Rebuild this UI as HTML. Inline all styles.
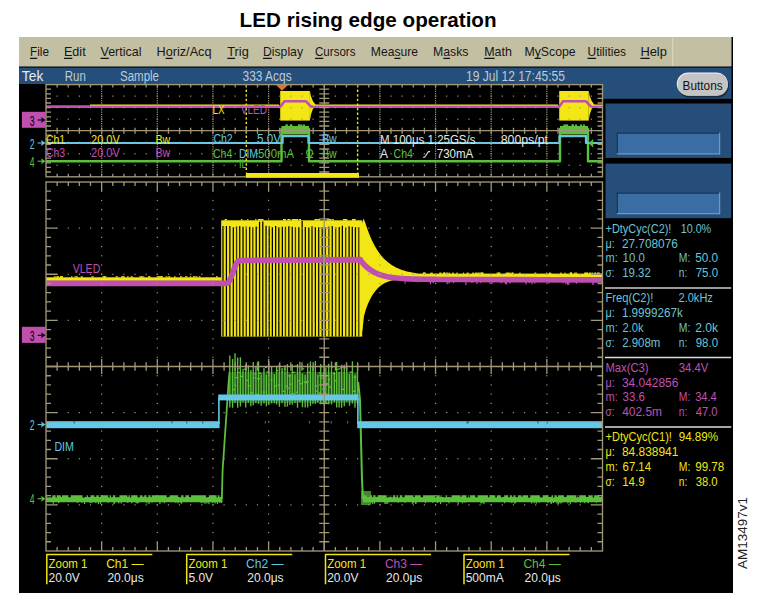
<!DOCTYPE html>
<html><head><meta charset="utf-8"><style>
html,body{margin:0;padding:0;background:#fff;width:762px;height:610px;overflow:hidden}
svg{display:block;font-family:"Liberation Sans", sans-serif}
</style></head><body>
<svg width="762" height="610" viewBox="0 0 762 610">
<text x="239.60" y="26.70" fill="#000" font-size="20.5" font-weight="bold" text-anchor="start" textLength="257.0" lengthAdjust="spacingAndGlyphs" >LED rising edge operation</text><rect x="19.00" y="37.00" width="714.00" height="556.00" fill="#000" /><rect x="19.00" y="37.00" width="712.50" height="29.50" fill="#c3bfa3" /><line x1="672.70" y1="38.00" x2="672.70" y2="66.00" stroke="#dedac4" stroke-width="1"/><rect x="19.00" y="67.60" width="712.50" height="16.40" fill="#254f7a" /><rect x="602.50" y="84.00" width="129.00" height="14.80" fill="#254f7a" /><rect x="605.50" y="103.50" width="125.70" height="54.40" fill="#254f7a" /><rect x="605.50" y="163.60" width="125.70" height="54.60" fill="#254f7a" /><rect x="616.80" y="132.70" width="103.30" height="21.60" fill="#3a6da3" /><line x1="616.80" y1="133.20" x2="720.10" y2="133.20" stroke="#17324e" stroke-width="1.2"/><line x1="617.30" y1="132.70" x2="617.30" y2="154.30" stroke="#17324e" stroke-width="1.2"/><line x1="616.80" y1="153.80" x2="720.10" y2="153.80" stroke="#6d98c4" stroke-width="1.2"/><line x1="719.60" y1="132.70" x2="719.60" y2="154.30" stroke="#6d98c4" stroke-width="1.2"/><rect x="616.80" y="192.60" width="103.30" height="21.60" fill="#3a6da3" /><line x1="616.80" y1="193.10" x2="720.10" y2="193.10" stroke="#17324e" stroke-width="1.2"/><line x1="617.30" y1="192.60" x2="617.30" y2="214.20" stroke="#17324e" stroke-width="1.2"/><line x1="616.80" y1="213.70" x2="720.10" y2="213.70" stroke="#6d98c4" stroke-width="1.2"/><line x1="719.60" y1="192.60" x2="719.60" y2="214.20" stroke="#6d98c4" stroke-width="1.2"/><rect x="678" y="74" width="51" height="23.5" rx="11.5" fill="#1a2a3a"/><rect x="676.8" y="72.4" width="51" height="23" rx="11.5" fill="#f4f4f4"/><rect x="677.6" y="73.4" width="50.4" height="22.4" rx="11.2" fill="#c4c4c4"/><text x="682.60" y="89.70" fill="#101010" font-size="12" font-weight="normal" text-anchor="start" textLength="40.0" lengthAdjust="spacingAndGlyphs" >Buttons</text><g><rect x="46.00" y="277.30" width="175.50" height="3.60" fill="#f2e614" /><rect x="105.05" y="276.30" width="1.30" height="1.20" fill="#f2e614" /><rect x="160.66" y="276.30" width="1.14" height="1.20" fill="#f2e614" /><rect x="141.10" y="276.30" width="1.73" height="1.20" fill="#f2e614" /><rect x="59.86" y="276.30" width="2.01" height="1.20" fill="#f2e614" /><rect x="56.37" y="276.30" width="1.87" height="1.20" fill="#f2e614" /><rect x="61.88" y="276.30" width="1.18" height="1.20" fill="#f2e614" /><rect x="122.17" y="276.30" width="2.65" height="1.20" fill="#f2e614" /><rect x="71.05" y="276.30" width="1.45" height="1.20" fill="#f2e614" /><rect x="156.66" y="276.30" width="2.90" height="1.20" fill="#f2e614" /><rect x="148.11" y="276.30" width="1.79" height="1.20" fill="#f2e614" /><rect x="215.96" y="276.30" width="1.09" height="1.20" fill="#f2e614" /><rect x="195.94" y="276.30" width="1.58" height="1.20" fill="#f2e614" /><rect x="74.52" y="276.30" width="1.24" height="1.20" fill="#f2e614" /><rect x="102.44" y="276.30" width="2.63" height="1.20" fill="#f2e614" /><rect x="80.72" y="276.30" width="2.16" height="1.20" fill="#f2e614" /><rect x="158.62" y="276.30" width="1.74" height="1.20" fill="#f2e614" /><rect x="143.12" y="276.30" width="1.13" height="1.20" fill="#f2e614" /><rect x="60.13" y="276.30" width="1.41" height="1.20" fill="#f2e614" /><rect x="165.67" y="276.30" width="1.86" height="1.20" fill="#f2e614" /><rect x="103.41" y="276.30" width="2.17" height="1.20" fill="#f2e614" /><rect x="127.04" y="276.30" width="1.60" height="1.20" fill="#f2e614" /><rect x="185.04" y="276.30" width="2.40" height="1.20" fill="#f2e614" /><rect x="91.50" y="276.30" width="2.15" height="1.20" fill="#f2e614" /><rect x="139.28" y="276.30" width="2.75" height="1.20" fill="#f2e614" /><rect x="174.01" y="276.30" width="1.58" height="1.20" fill="#f2e614" /><rect x="216.63" y="276.30" width="1.24" height="1.20" fill="#f2e614" /><rect x="121.08" y="276.30" width="2.51" height="1.20" fill="#f2e614" /><rect x="75.84" y="276.30" width="1.98" height="1.20" fill="#f2e614" /><rect x="56.67" y="276.30" width="2.34" height="1.20" fill="#f2e614" /><rect x="179.98" y="276.30" width="2.15" height="1.20" fill="#f2e614" /><rect x="198.83" y="276.30" width="1.63" height="1.20" fill="#f2e614" /><rect x="168.20" y="276.30" width="2.19" height="1.20" fill="#f2e614" /><rect x="148.58" y="276.30" width="1.91" height="1.20" fill="#f2e614" /><rect x="192.79" y="276.30" width="2.89" height="1.20" fill="#f2e614" /><rect x="130.60" y="276.30" width="2.33" height="1.20" fill="#f2e614" /><rect x="60.31" y="276.30" width="2.40" height="1.20" fill="#f2e614" /><rect x="160.01" y="276.30" width="2.99" height="1.20" fill="#f2e614" /><rect x="189.73" y="276.30" width="1.57" height="1.20" fill="#f2e614" /><rect x="115.58" y="276.30" width="2.34" height="1.20" fill="#f2e614" /><rect x="53.84" y="276.30" width="1.92" height="1.20" fill="#f2e614" /><rect x="221.20" y="220.30" width="141.00" height="8.00" fill="#f2e614" /><rect x="221.20" y="225.80" width="141.00" height="110.80" fill="#f2e614" /><path d="M223.00 226.09V336.6M226.41 226.02V336.6M229.86 225.94V336.6M233.31 227.19V336.6M239.74 226.10V336.6M243.03 226.80V336.6M249.67 226.68V336.6M256.21 226.47V336.6M259.57 221.63V336.6M262.80 221.45V336.6M266.05 225.84V336.6M269.21 226.23V336.6M272.36 227.24V336.6M275.65 225.95V336.6M278.86 227.21V336.6M282.34 226.70V336.6M288.83 226.24V336.6M292.24 226.71V336.6M298.85 227.19V336.6M302.15 221.08V336.6M305.36 226.98V336.6M308.83 227.48V336.6M312.02 226.19V336.6M315.37 227.33V336.6M318.73 227.16V336.6M322.20 227.13V336.6M332.25 226.09V336.6M339.20 226.92V336.6M342.35 225.82V336.6M349.09 226.16V336.6M352.29 226.80V336.6M355.44 227.35V336.6" stroke="#000" stroke-width="1.25" fill="none" stroke-linejoin="miter" /><path d="M236.58 226.41V336.6M246.30 226.43V336.6M252.80 227.33V336.6M285.45 226.70V336.6M295.43 227.18V336.6M325.37 227.14V336.6M328.86 226.47V336.6M335.71 227.17V336.6M345.66 227.39V336.6M358.78 227.34V336.6" stroke="#3a3400" stroke-width="1.3" fill="none" stroke-linejoin="miter" /><rect x="295.39" y="219.00" width="2.57" height="1.50" fill="#f2e614" /><rect x="224.58" y="219.00" width="2.32" height="1.50" fill="#f2e614" /><rect x="247.27" y="219.00" width="1.01" height="1.50" fill="#f2e614" /><rect x="332.29" y="219.00" width="1.52" height="1.50" fill="#f2e614" /><rect x="287.34" y="219.00" width="3.18" height="1.50" fill="#f2e614" /><rect x="298.79" y="219.00" width="1.98" height="1.50" fill="#f2e614" /><rect x="293.53" y="219.00" width="2.67" height="1.50" fill="#f2e614" /><rect x="330.23" y="219.00" width="1.32" height="1.50" fill="#f2e614" /><rect x="299.32" y="219.00" width="1.75" height="1.50" fill="#f2e614" /><rect x="260.21" y="219.00" width="3.32" height="1.50" fill="#f2e614" /><rect x="292.06" y="219.00" width="2.69" height="1.50" fill="#f2e614" /><rect x="326.88" y="219.00" width="3.74" height="1.50" fill="#f2e614" /><rect x="283.17" y="219.00" width="2.84" height="1.50" fill="#f2e614" /><rect x="291.77" y="219.00" width="2.54" height="1.50" fill="#f2e614" /><rect x="317.60" y="219.00" width="2.36" height="1.50" fill="#f2e614" /><rect x="295.59" y="219.00" width="2.43" height="1.50" fill="#f2e614" /><rect x="351.93" y="219.00" width="3.10" height="1.50" fill="#f2e614" /><rect x="342.96" y="219.00" width="3.83" height="1.50" fill="#f2e614" /><rect x="257.82" y="219.00" width="2.68" height="1.50" fill="#f2e614" /><rect x="352.17" y="219.00" width="3.52" height="1.50" fill="#f2e614" /><rect x="240.92" y="219.00" width="1.36" height="1.50" fill="#f2e614" /><rect x="283.01" y="219.00" width="1.22" height="1.50" fill="#f2e614" /><rect x="255.21" y="219.00" width="1.22" height="1.50" fill="#f2e614" /><rect x="314.39" y="219.00" width="3.35" height="1.50" fill="#f2e614" /><rect x="345.79" y="219.00" width="1.46" height="1.50" fill="#f2e614" /><path d="M361.00 226.50 L363.60 218.60 L365.20 222.50 L366.00 225.11 L368.00 230.87 L370.00 235.98 L372.00 240.50 L374.00 244.51 L376.00 248.06 L378.00 251.20 L380.00 253.99 L382.00 256.45 L384.00 258.64 L386.00 260.57 L388.00 262.29 L390.00 263.81 L392.00 265.16 L394.00 266.35 L396.00 267.40 L398.00 268.34 L400.00 269.17 L402.00 269.90 L404.00 270.55 L406.00 271.13 L408.00 271.64 L410.00 272.09 L412.00 272.49 L414.00 272.85 L416.00 273.16 L418.00 273.44 L420.00 273.69 L422.00 273.90 L424.00 274.10 L426.00 274.27 L428.00 274.42 L430.00 274.56 L432.00 274.68 L434.00 274.78 L436.00 274.87 L438.00 274.96 L440.00 275.03 L440.00 277.44 L438.00 277.45 L436.00 277.45 L434.00 277.47 L432.00 277.48 L430.00 277.49 L428.00 277.51 L426.00 277.54 L424.00 277.56 L422.00 277.59 L420.00 277.63 L418.00 277.68 L416.00 277.74 L414.00 277.80 L412.00 277.88 L410.00 277.98 L408.00 278.10 L406.00 278.23 L404.00 278.40 L402.00 278.60 L400.00 278.84 L398.00 279.13 L396.00 279.47 L394.00 279.89 L392.00 280.38 L390.00 280.97 L388.00 281.69 L386.00 282.54 L384.00 283.57 L382.00 284.80 L380.00 286.27 L378.00 288.04 L376.00 290.16 L374.00 292.71 L372.00 295.76 L370.00 299.42 L368.00 303.82 L366.00 309.08 L364.00 316.00 L362.50 330.00 L361.00 336.60Z" fill="#f2e614"/><rect x="420.00" y="273.60" width="182.50" height="3.80" fill="#f2e614" /><rect x="548.90" y="272.60" width="2.32" height="1.30" fill="#f2e614" /><rect x="445.74" y="272.60" width="2.77" height="1.30" fill="#f2e614" /><rect x="594.16" y="272.60" width="1.44" height="1.30" fill="#f2e614" /><rect x="591.45" y="272.60" width="1.80" height="1.30" fill="#f2e614" /><rect x="507.71" y="272.60" width="2.98" height="1.30" fill="#f2e614" /><rect x="569.84" y="272.60" width="1.32" height="1.30" fill="#f2e614" /><rect x="497.67" y="272.60" width="2.03" height="1.30" fill="#f2e614" /><rect x="481.04" y="272.60" width="1.39" height="1.30" fill="#f2e614" /><rect x="477.33" y="272.60" width="2.44" height="1.30" fill="#f2e614" /><rect x="423.51" y="272.60" width="2.11" height="1.30" fill="#f2e614" /><rect x="499.28" y="272.60" width="1.04" height="1.30" fill="#f2e614" /><rect x="479.67" y="272.60" width="2.25" height="1.30" fill="#f2e614" /><rect x="512.21" y="272.60" width="1.13" height="1.30" fill="#f2e614" /><rect x="597.31" y="272.60" width="2.58" height="1.30" fill="#f2e614" /><rect x="594.91" y="272.60" width="1.21" height="1.30" fill="#f2e614" /><rect x="467.80" y="272.60" width="1.08" height="1.30" fill="#f2e614" /><rect x="560.22" y="272.60" width="1.54" height="1.30" fill="#f2e614" /><rect x="443.32" y="272.60" width="1.84" height="1.30" fill="#f2e614" /><rect x="584.05" y="272.60" width="2.64" height="1.30" fill="#f2e614" /><rect x="466.55" y="272.60" width="1.30" height="1.30" fill="#f2e614" /><rect x="585.45" y="272.60" width="2.14" height="1.30" fill="#f2e614" /><rect x="546.08" y="272.60" width="1.18" height="1.30" fill="#f2e614" /><rect x="430.35" y="272.60" width="2.38" height="1.30" fill="#f2e614" /><rect x="496.56" y="272.60" width="1.14" height="1.30" fill="#f2e614" /><rect x="588.90" y="272.60" width="2.27" height="1.30" fill="#f2e614" /><rect x="564.29" y="272.60" width="1.17" height="1.30" fill="#f2e614" /><rect x="574.12" y="272.60" width="1.13" height="1.30" fill="#f2e614" /><rect x="575.30" y="272.60" width="1.91" height="1.30" fill="#f2e614" /><rect x="481.05" y="272.60" width="2.11" height="1.30" fill="#f2e614" /><rect x="586.80" y="272.60" width="1.54" height="1.30" fill="#f2e614" /><rect x="443.26" y="272.60" width="2.05" height="1.30" fill="#f2e614" /><rect x="462.92" y="272.60" width="1.22" height="1.30" fill="#f2e614" /><rect x="449.06" y="272.60" width="1.10" height="1.30" fill="#f2e614" /><rect x="456.32" y="272.60" width="1.62" height="1.30" fill="#f2e614" /><rect x="474.90" y="272.60" width="2.52" height="1.30" fill="#f2e614" /><rect x="472.19" y="272.60" width="2.00" height="1.30" fill="#f2e614" /><rect x="452.02" y="272.60" width="1.69" height="1.30" fill="#f2e614" /><rect x="423.27" y="272.60" width="1.50" height="1.30" fill="#f2e614" /><rect x="422.76" y="272.60" width="2.47" height="1.30" fill="#f2e614" /><rect x="519.19" y="272.60" width="1.38" height="1.30" fill="#f2e614" /><rect x="505.46" y="272.60" width="2.87" height="1.30" fill="#f2e614" /><rect x="439.13" y="272.60" width="2.64" height="1.30" fill="#f2e614" /><rect x="497.79" y="272.60" width="1.99" height="1.30" fill="#f2e614" /><rect x="570.23" y="272.60" width="1.79" height="1.30" fill="#f2e614" /><rect x="511.20" y="272.60" width="2.38" height="1.30" fill="#f2e614" /><rect x="596.84" y="272.60" width="1.69" height="1.30" fill="#f2e614" /><rect x="569.81" y="272.60" width="2.41" height="1.30" fill="#f2e614" /><rect x="534.48" y="272.60" width="1.81" height="1.30" fill="#f2e614" /><rect x="482.56" y="272.60" width="1.11" height="1.30" fill="#f2e614" /><rect x="443.37" y="272.60" width="1.14" height="1.30" fill="#f2e614" /><path d="M46.00 283.40 L226.80 283.40 L227.76 283.07 L228.72 282.09 L229.68 280.52 L230.65 278.45 L231.61 276.01 L232.57 273.33 L233.53 270.57 L234.49 267.89 L235.45 265.45 L236.42 263.38 L237.38 261.81 L238.34 260.83 L239.30 260.50 L360.30 259.60 L360.30 259.92 L363.30 263.70 L366.30 266.75 L369.30 269.21 L372.30 271.19 L375.30 272.79 L378.30 274.09 L381.30 275.13 L384.30 275.97 L387.30 276.65 L390.30 277.20 L393.30 277.65 L396.30 278.00 L399.30 278.29 L402.30 278.53 L405.30 278.71 L408.30 278.87 L411.30 278.99 L414.30 279.09 L417.30 279.17 L420.30 279.23 L423.30 279.28 L426.30 279.32 L429.30 279.36 L432.30 279.39 L435.30 279.41 L438.30 279.43 L441.30 279.44 L444.30 279.45 L447.30 279.46 L450.30 279.47 L453.30 279.47 L456.30 279.48 L459.30 279.48 L602.50 280.00" stroke="#c050b0" stroke-width="5.6" fill="none" stroke-linejoin="round" /><rect x="548.18" y="281.50" width="1.20" height="2.01" fill="#c050b0" /><rect x="432.65" y="281.50" width="1.20" height="1.67" fill="#c050b0" /><rect x="568.25" y="281.50" width="1.20" height="3.24" fill="#c050b0" /><rect x="534.11" y="281.50" width="1.20" height="2.06" fill="#c050b0" /><rect x="448.44" y="281.50" width="1.20" height="2.09" fill="#c050b0" /><rect x="491.89" y="281.50" width="1.20" height="1.82" fill="#c050b0" /><rect x="489.16" y="281.50" width="1.20" height="2.03" fill="#c050b0" /><rect x="592.36" y="281.50" width="1.20" height="3.45" fill="#c050b0" /><rect x="509.41" y="281.50" width="1.20" height="1.99" fill="#c050b0" /><rect x="593.13" y="281.50" width="1.20" height="2.12" fill="#c050b0" /><rect x="471.32" y="281.50" width="1.20" height="1.50" fill="#c050b0" /><rect x="476.33" y="281.50" width="1.20" height="2.45" fill="#c050b0" /><rect x="500.55" y="281.50" width="1.20" height="1.90" fill="#c050b0" /><rect x="500.95" y="281.50" width="1.20" height="1.51" fill="#c050b0" /><rect x="452.83" y="281.50" width="1.20" height="1.68" fill="#c050b0" /><rect x="479.90" y="281.50" width="1.20" height="1.58" fill="#c050b0" /><rect x="404.50" y="281.50" width="1.20" height="2.11" fill="#c050b0" /><rect x="446.56" y="281.50" width="1.20" height="2.67" fill="#c050b0" /><rect x="505.84" y="281.50" width="1.20" height="3.00" fill="#c050b0" /><rect x="531.51" y="281.50" width="1.20" height="2.93" fill="#c050b0" /><rect x="575.82" y="281.50" width="1.20" height="2.28" fill="#c050b0" /><rect x="465.23" y="281.50" width="1.20" height="3.47" fill="#c050b0" /><rect x="429.89" y="281.50" width="1.20" height="2.95" fill="#c050b0" /><rect x="528.64" y="281.50" width="1.20" height="1.59" fill="#c050b0" /><rect x="567.06" y="281.50" width="1.20" height="3.28" fill="#c050b0" /><rect x="525.47" y="281.50" width="1.20" height="2.97" fill="#c050b0" /><rect x="562.44" y="281.50" width="1.20" height="1.78" fill="#c050b0" /><rect x="504.75" y="281.50" width="1.20" height="2.51" fill="#c050b0" /><rect x="566.99" y="281.50" width="1.20" height="3.11" fill="#c050b0" /><rect x="565.28" y="281.50" width="1.20" height="2.67" fill="#c050b0" /><path d="M46 498.7H222.5" stroke="#5cc03c" stroke-width="7" fill="none"/><rect x="205.92" y="495.10" width="2.02" height="2.19" fill="#000" /><rect x="87.93" y="495.10" width="1.05" height="1.63" fill="#000" /><rect x="111.21" y="495.10" width="1.16" height="2.34" fill="#000" /><rect x="146.42" y="495.10" width="1.94" height="2.13" fill="#000" /><rect x="168.16" y="495.10" width="1.73" height="1.50" fill="#000" /><rect x="188.99" y="495.10" width="2.12" height="2.00" fill="#000" /><rect x="142.27" y="495.10" width="1.99" height="1.57" fill="#000" /><rect x="178.15" y="495.10" width="1.38" height="1.57" fill="#000" /><rect x="94.27" y="495.10" width="2.09" height="1.71" fill="#000" /><rect x="178.69" y="495.10" width="2.46" height="1.99" fill="#000" /><rect x="115.10" y="495.10" width="1.72" height="2.18" fill="#000" /><rect x="183.52" y="495.10" width="1.93" height="2.14" fill="#000" /><rect x="60.79" y="495.10" width="1.22" height="1.75" fill="#000" /><rect x="179.29" y="495.10" width="1.46" height="2.07" fill="#000" /><rect x="49.22" y="495.10" width="1.09" height="1.77" fill="#000" /><rect x="166.62" y="495.10" width="2.04" height="2.18" fill="#000" /><rect x="98.77" y="495.10" width="1.77" height="1.96" fill="#000" /><rect x="130.01" y="495.10" width="1.18" height="2.39" fill="#000" /><rect x="82.47" y="495.10" width="2.47" height="2.44" fill="#000" /><rect x="50.12" y="495.10" width="1.69" height="2.32" fill="#000" /><rect x="219.32" y="495.10" width="1.67" height="1.77" fill="#000" /><rect x="84.35" y="495.10" width="2.42" height="1.71" fill="#000" /><rect x="150.50" y="495.10" width="1.21" height="2.02" fill="#000" /><rect x="216.59" y="495.10" width="1.20" height="2.32" fill="#000" /><rect x="137.56" y="495.10" width="2.33" height="2.20" fill="#000" /><rect x="88.19" y="495.10" width="2.35" height="1.99" fill="#000" /><rect x="51.42" y="495.10" width="1.01" height="1.99" fill="#000" /><rect x="127.24" y="495.10" width="1.45" height="1.64" fill="#000" /><rect x="108.22" y="495.10" width="1.47" height="2.34" fill="#000" /><rect x="47.31" y="495.10" width="2.13" height="2.34" fill="#000" /><rect x="68.37" y="495.10" width="2.39" height="2.21" fill="#000" /><rect x="207.48" y="495.10" width="1.43" height="1.87" fill="#000" /><rect x="116.94" y="495.10" width="2.50" height="2.09" fill="#000" /><rect x="111.21" y="495.10" width="1.64" height="1.78" fill="#000" /><rect x="55.59" y="495.10" width="1.15" height="2.33" fill="#000" /><rect x="97.84" y="501.70" width="1.20" height="2.40" fill="#5cc03c" /><rect x="91.38" y="501.70" width="1.20" height="1.40" fill="#5cc03c" /><rect x="137.95" y="501.70" width="1.20" height="1.28" fill="#5cc03c" /><rect x="113.46" y="501.70" width="1.20" height="2.43" fill="#5cc03c" /><rect x="204.40" y="501.70" width="1.20" height="2.22" fill="#5cc03c" /><rect x="159.30" y="501.70" width="1.20" height="2.37" fill="#5cc03c" /><rect x="214.44" y="501.70" width="1.20" height="1.82" fill="#5cc03c" /><rect x="175.08" y="501.70" width="1.20" height="1.07" fill="#5cc03c" /><rect x="177.36" y="501.70" width="1.20" height="1.68" fill="#5cc03c" /><rect x="180.97" y="501.70" width="1.20" height="1.97" fill="#5cc03c" /><rect x="97.95" y="501.70" width="1.20" height="1.07" fill="#5cc03c" /><rect x="211.97" y="501.70" width="1.20" height="1.19" fill="#5cc03c" /><rect x="131.05" y="501.70" width="1.20" height="1.52" fill="#5cc03c" /><rect x="100.00" y="501.70" width="1.20" height="2.11" fill="#5cc03c" /><rect x="220.78" y="501.70" width="1.20" height="1.39" fill="#5cc03c" /><rect x="163.77" y="501.70" width="1.20" height="1.45" fill="#5cc03c" /><rect x="146.20" y="501.70" width="1.20" height="1.59" fill="#5cc03c" /><rect x="76.79" y="501.70" width="1.20" height="1.24" fill="#5cc03c" /><rect x="84.00" y="501.70" width="1.20" height="2.36" fill="#5cc03c" /><rect x="135.48" y="501.70" width="1.20" height="1.33" fill="#5cc03c" /><rect x="208.31" y="501.70" width="1.20" height="2.49" fill="#5cc03c" /><rect x="127.09" y="501.70" width="1.20" height="1.21" fill="#5cc03c" /><rect x="81.25" y="501.70" width="1.20" height="1.14" fill="#5cc03c" /><rect x="107.87" y="501.70" width="1.20" height="1.14" fill="#5cc03c" /><rect x="89.56" y="501.70" width="1.20" height="1.39" fill="#5cc03c" /><rect x="148.39" y="501.70" width="1.20" height="2.33" fill="#5cc03c" /><rect x="180.44" y="501.70" width="1.20" height="1.62" fill="#5cc03c" /><rect x="120.67" y="501.70" width="1.20" height="1.79" fill="#5cc03c" /><rect x="114.08" y="501.70" width="1.20" height="1.51" fill="#5cc03c" /><rect x="58.05" y="501.70" width="1.20" height="1.42" fill="#5cc03c" /><rect x="219.25" y="501.70" width="1.20" height="1.19" fill="#5cc03c" /><rect x="136.60" y="501.70" width="1.20" height="1.94" fill="#5cc03c" /><rect x="200.59" y="501.70" width="1.20" height="1.32" fill="#5cc03c" /><rect x="95.24" y="501.70" width="1.20" height="1.37" fill="#5cc03c" /><rect x="118.16" y="501.70" width="1.20" height="1.67" fill="#5cc03c" /><rect x="216.80" y="501.70" width="1.20" height="2.27" fill="#5cc03c" /><rect x="202.37" y="501.70" width="1.20" height="1.03" fill="#5cc03c" /><rect x="52.74" y="501.70" width="1.20" height="2.06" fill="#5cc03c" /><rect x="206.43" y="501.70" width="1.20" height="1.71" fill="#5cc03c" /><rect x="151.52" y="501.70" width="1.20" height="1.00" fill="#5cc03c" /><path d="M221.8 499 L222.6 470 L226.6 412 L228.4 385 L229.5 372" stroke="#5cc03c" stroke-width="1.8" fill="none" stroke-linejoin="round" /><rect x="229.50" y="372.00" width="128.50" height="31.00" fill="#1f4a16" /><path d="M229.80 407.56V355.44M232.60 407.83V358.92M235.04 402.93V353.32M237.66 407.65V357.62M240.39 406.59V357.36M242.97 402.24V368.72M245.73 407.52V364.26M248.42 402.77V365.25M250.87 406.19V369.91M253.24 405.15V361.98M255.89 403.34V366.43M258.55 403.81V361.15M261.13 405.87V374.43M263.96 403.41V367.65M266.41 406.23V374.45M268.89 404.99V361.31M271.59 403.54V366.88M274.30 403.36V373.95M276.62 404.52V365.73M279.33 406.78V363.77M282.07 403.23V368.07M284.95 406.92V365.36M287.39 406.56V364.10M289.87 404.97V374.33M292.28 404.50V364.13M294.98 402.88V374.28M297.51 407.84V363.98M299.90 402.36V361.73M302.43 407.30V373.57M305.17 407.59V374.97M307.67 407.62V363.60M310.42 405.99V361.45M312.95 403.99V366.23M315.35 403.68V361.04M317.86 402.74V374.38M320.74 404.14V363.90M323.53 404.59V372.51M325.86 404.24V367.63M328.71 404.19V363.70M331.55 404.46V361.42M334.34 402.24V371.73M336.66 407.52V361.88M339.11 407.39V371.46M341.62 407.75V364.81M344.29 406.30V364.67M346.78 402.02V364.86M349.53 405.80V373.83M352.40 403.40V361.34M354.98 407.72V374.39M357.51 404.58V364.51" stroke="#5cc03c" stroke-width="1.35" fill="none" stroke-linejoin="miter" /><path d="M229.80 395.70h1.77M232.08 389.63h2.73M234.32 385.43h1.99M235.83 377.58h2.67M236.96 372.31h2.63M238.35 368.07h1.55M240.24 376.42h2.97M242.65 397.61h1.90M243.79 369.09h2.25M245.92 380.30h1.85M247.59 385.85h2.51M249.79 393.10h2.50M250.98 392.91h1.94M252.89 377.94h2.61M254.21 373.92h1.87M255.45 394.29h2.37M256.97 378.67h2.99M258.78 373.40h2.71M260.83 397.71h1.65M262.59 392.21h2.76M265.05 367.29h1.94M266.24 372.07h2.96M268.18 395.77h2.06M270.56 380.37h1.89M272.81 396.26h1.66M274.76 385.84h1.83M276.35 370.52h1.81M277.76 385.18h2.48M279.08 366.36h1.99M281.17 371.92h1.97M282.49 391.45h2.32M283.60 369.24h2.09M285.48 386.45h1.64M286.74 388.25h2.11M288.19 375.84h2.93M289.69 384.13h2.04M291.36 393.66h2.99M292.94 372.31h2.59M294.26 366.19h2.85M295.94 392.25h2.11M298.36 380.75h1.74M299.38 383.65h2.46M301.83 368.85h2.43M303.43 382.14h1.72M304.88 382.68h2.89M306.06 381.70h2.71M308.60 372.31h1.69M311.11 397.22h2.22M312.20 395.64h2.08M314.64 385.85h2.74M315.90 391.15h1.83M317.55 393.08h2.74M318.84 372.98h2.10M320.67 378.27h1.68M322.06 389.20h2.85M323.13 383.99h2.64M324.19 392.82h1.68M326.15 383.60h2.44M327.64 379.44h2.37M329.32 387.08h2.17M331.02 366.75h2.43M332.81 373.53h2.65M335.05 380.67h1.77M336.81 369.43h1.69M338.50 368.93h2.16M340.32 367.30h2.45M341.45 389.47h2.67M343.27 367.74h2.26M344.87 396.43h1.70M347.24 397.88h2.60M349.55 372.20h2.97M351.33 396.61h2.87M352.60 391.23h2.90M353.70 377.23h2.63M354.96 394.69h1.91" stroke="#5cc03c" stroke-width="1.3" fill="none" stroke-linejoin="round" /><path d="M358.2 382 L360 400 L361 440 L362 480 L363 499" stroke="#5cc03c" stroke-width="2" fill="none" stroke-linejoin="round" /><path d="M363 498.7H602.5" stroke="#5cc03c" stroke-width="7" fill="none"/><rect x="398.03" y="495.10" width="1.75" height="2.42" fill="#000" /><rect x="413.37" y="495.10" width="1.39" height="2.01" fill="#000" /><rect x="439.62" y="495.10" width="1.06" height="1.68" fill="#000" /><rect x="402.21" y="495.10" width="2.40" height="2.18" fill="#000" /><rect x="576.21" y="495.10" width="1.25" height="2.28" fill="#000" /><rect x="391.27" y="495.10" width="1.80" height="2.14" fill="#000" /><rect x="449.27" y="495.10" width="2.31" height="2.06" fill="#000" /><rect x="501.47" y="495.10" width="2.32" height="1.60" fill="#000" /><rect x="599.33" y="495.10" width="1.94" height="1.89" fill="#000" /><rect x="553.05" y="495.10" width="1.40" height="2.49" fill="#000" /><rect x="500.83" y="495.10" width="1.54" height="2.26" fill="#000" /><rect x="468.82" y="495.10" width="1.27" height="2.24" fill="#000" /><rect x="375.45" y="495.10" width="2.23" height="1.75" fill="#000" /><rect x="515.50" y="495.10" width="2.48" height="2.09" fill="#000" /><rect x="521.30" y="495.10" width="1.47" height="1.50" fill="#000" /><rect x="372.01" y="495.10" width="1.22" height="2.12" fill="#000" /><rect x="466.44" y="495.10" width="1.77" height="2.40" fill="#000" /><rect x="395.29" y="495.10" width="1.34" height="2.15" fill="#000" /><rect x="369.28" y="495.10" width="1.00" height="1.85" fill="#000" /><rect x="389.21" y="495.10" width="1.54" height="1.72" fill="#000" /><rect x="502.31" y="495.10" width="1.88" height="1.70" fill="#000" /><rect x="511.87" y="495.10" width="1.71" height="1.63" fill="#000" /><rect x="585.97" y="495.10" width="1.37" height="1.65" fill="#000" /><rect x="386.71" y="495.10" width="1.96" height="2.37" fill="#000" /><rect x="549.37" y="495.10" width="1.60" height="1.76" fill="#000" /><rect x="366.72" y="495.10" width="1.97" height="2.06" fill="#000" /><rect x="447.03" y="495.10" width="1.97" height="1.94" fill="#000" /><rect x="586.11" y="495.10" width="2.10" height="1.75" fill="#000" /><rect x="578.13" y="495.10" width="1.07" height="2.03" fill="#000" /><rect x="460.22" y="495.10" width="1.36" height="1.56" fill="#000" /><rect x="548.59" y="495.10" width="1.02" height="2.05" fill="#000" /><rect x="587.00" y="495.10" width="1.21" height="1.70" fill="#000" /><rect x="508.12" y="495.10" width="1.76" height="2.14" fill="#000" /><rect x="556.77" y="495.10" width="1.26" height="1.81" fill="#000" /><rect x="435.16" y="495.10" width="1.07" height="2.39" fill="#000" /><rect x="549.56" y="495.10" width="2.07" height="1.51" fill="#000" /><rect x="564.13" y="495.10" width="2.12" height="1.97" fill="#000" /><rect x="539.80" y="495.10" width="1.68" height="1.73" fill="#000" /><rect x="388.95" y="495.10" width="1.35" height="1.54" fill="#000" /><rect x="443.52" y="495.10" width="2.12" height="2.20" fill="#000" /><rect x="564.34" y="495.10" width="2.07" height="1.77" fill="#000" /><rect x="495.25" y="495.10" width="1.65" height="2.29" fill="#000" /><rect x="488.01" y="495.10" width="1.40" height="2.14" fill="#000" /><rect x="592.74" y="495.10" width="1.33" height="2.38" fill="#000" /><rect x="367.61" y="495.10" width="1.39" height="1.74" fill="#000" /><rect x="540.30" y="495.10" width="2.42" height="2.25" fill="#000" /><rect x="441.47" y="495.10" width="2.32" height="1.83" fill="#000" /><rect x="420.68" y="495.10" width="2.36" height="2.13" fill="#000" /><rect x="528.20" y="495.10" width="2.00" height="2.48" fill="#000" /><rect x="475.27" y="495.10" width="2.26" height="2.20" fill="#000" /><rect x="567.23" y="501.70" width="1.20" height="1.66" fill="#5cc03c" /><rect x="535.74" y="501.70" width="1.20" height="1.86" fill="#5cc03c" /><rect x="436.94" y="501.70" width="1.20" height="1.32" fill="#5cc03c" /><rect x="511.56" y="501.70" width="1.20" height="1.12" fill="#5cc03c" /><rect x="579.86" y="501.70" width="1.20" height="1.22" fill="#5cc03c" /><rect x="370.38" y="501.70" width="1.20" height="1.16" fill="#5cc03c" /><rect x="584.16" y="501.70" width="1.20" height="1.52" fill="#5cc03c" /><rect x="397.62" y="501.70" width="1.20" height="1.04" fill="#5cc03c" /><rect x="373.87" y="501.70" width="1.20" height="2.04" fill="#5cc03c" /><rect x="514.23" y="501.70" width="1.20" height="2.05" fill="#5cc03c" /><rect x="538.62" y="501.70" width="1.20" height="1.10" fill="#5cc03c" /><rect x="503.94" y="501.70" width="1.20" height="1.55" fill="#5cc03c" /><rect x="557.76" y="501.70" width="1.20" height="2.23" fill="#5cc03c" /><rect x="575.23" y="501.70" width="1.20" height="1.10" fill="#5cc03c" /><rect x="569.67" y="501.70" width="1.20" height="2.37" fill="#5cc03c" /><rect x="587.81" y="501.70" width="1.20" height="1.16" fill="#5cc03c" /><rect x="412.76" y="501.70" width="1.20" height="1.17" fill="#5cc03c" /><rect x="372.16" y="501.70" width="1.20" height="2.27" fill="#5cc03c" /><rect x="556.45" y="501.70" width="1.20" height="1.95" fill="#5cc03c" /><rect x="559.54" y="501.70" width="1.20" height="1.95" fill="#5cc03c" /><rect x="432.11" y="501.70" width="1.20" height="1.15" fill="#5cc03c" /><rect x="387.19" y="501.70" width="1.20" height="2.14" fill="#5cc03c" /><rect x="412.58" y="501.70" width="1.20" height="1.48" fill="#5cc03c" /><rect x="464.43" y="501.70" width="1.20" height="1.03" fill="#5cc03c" /><rect x="424.84" y="501.70" width="1.20" height="1.42" fill="#5cc03c" /><rect x="533.64" y="501.70" width="1.20" height="1.55" fill="#5cc03c" /><rect x="440.04" y="501.70" width="1.20" height="2.45" fill="#5cc03c" /><rect x="483.39" y="501.70" width="1.20" height="2.28" fill="#5cc03c" /><rect x="510.53" y="501.70" width="1.20" height="1.05" fill="#5cc03c" /><rect x="461.86" y="501.70" width="1.20" height="1.65" fill="#5cc03c" /><rect x="547.21" y="501.70" width="1.20" height="1.52" fill="#5cc03c" /><rect x="531.00" y="501.70" width="1.20" height="1.81" fill="#5cc03c" /><rect x="415.33" y="501.70" width="1.20" height="2.29" fill="#5cc03c" /><rect x="385.54" y="501.70" width="1.20" height="2.23" fill="#5cc03c" /><rect x="404.38" y="501.70" width="1.20" height="1.00" fill="#5cc03c" /><rect x="411.88" y="501.70" width="1.20" height="2.14" fill="#5cc03c" /><rect x="595.75" y="501.70" width="1.20" height="1.01" fill="#5cc03c" /><rect x="480.33" y="501.70" width="1.20" height="1.74" fill="#5cc03c" /><rect x="552.83" y="501.70" width="1.20" height="1.28" fill="#5cc03c" /><rect x="481.22" y="501.70" width="1.20" height="1.52" fill="#5cc03c" /><rect x="561.15" y="501.70" width="1.20" height="1.39" fill="#5cc03c" /><rect x="587.70" y="501.70" width="1.20" height="1.43" fill="#5cc03c" /><rect x="414.89" y="501.70" width="1.20" height="2.05" fill="#5cc03c" /><rect x="482.10" y="501.70" width="1.20" height="1.16" fill="#5cc03c" /><rect x="514.86" y="501.70" width="1.20" height="1.12" fill="#5cc03c" /><rect x="550.74" y="501.70" width="1.20" height="2.05" fill="#5cc03c" /><rect x="550.50" y="501.70" width="1.20" height="1.94" fill="#5cc03c" /><rect x="448.28" y="501.70" width="1.20" height="1.60" fill="#5cc03c" /><rect x="457.52" y="501.70" width="1.20" height="2.34" fill="#5cc03c" /><rect x="384.42" y="501.70" width="1.20" height="2.33" fill="#5cc03c" /><rect x="361.00" y="491.00" width="10.00" height="14.00" fill="#5cc03c" opacity="0.7"/><rect x="46.00" y="421.20" width="173.60" height="7.00" fill="#64c8e6" /><rect x="218.20" y="394.50" width="140.40" height="5.90" fill="#64c8e6" /><rect x="357.20" y="421.20" width="245.30" height="7.00" fill="#64c8e6" /><path d="M218.9 424 V398 M357.9 398 V424" stroke="#64c8e6" stroke-width="1.6" fill="none" stroke-linejoin="round" /><rect x="73.59" y="421.00" width="1.20" height="2.50" fill="#2a6a80" /><rect x="171.30" y="421.00" width="1.20" height="2.50" fill="#2a6a80" /><rect x="202.13" y="421.00" width="1.20" height="2.50" fill="#2a6a80" /><rect x="546.66" y="421.00" width="1.20" height="2.50" fill="#2a6a80" /><rect x="330.64" y="421.00" width="1.20" height="2.50" fill="#2a6a80" /><rect x="264.82" y="421.00" width="1.20" height="2.50" fill="#2a6a80" /><rect x="537.35" y="421.00" width="1.20" height="2.50" fill="#2a6a80" /><rect x="186.13" y="421.00" width="1.20" height="2.50" fill="#2a6a80" /><rect x="308.89" y="421.00" width="1.20" height="2.50" fill="#2a6a80" /><rect x="347.03" y="421.00" width="1.20" height="2.50" fill="#2a6a80" /><rect x="467.42" y="421.00" width="1.20" height="2.50" fill="#2a6a80" /><rect x="466.61" y="421.00" width="1.20" height="2.50" fill="#2a6a80" /></g><g><rect x="280.20" y="91.00" width="29.70" height="29.60" fill="#f2e614" /><path d="M309.90 91 L310.90 96 L312.90 101 L315.40 104.5 L315.40 106.5 L312.90 109 L311.10 114 L309.90 120.6 Z" fill="#f2e614"/><rect x="559.20" y="91.00" width="29.50" height="29.60" fill="#f2e614" /><path d="M588.70 91 L589.70 96 L591.70 101 L594.20 104.5 L594.20 106.5 L591.70 109 L589.90 114 L588.70 120.6 Z" fill="#f2e614"/><path d="M46 106.6 H280.4 L284.5 101.3 H306 L311 106.6 H559.4 L563 101.3 H586 L591 106.6 H602.5" stroke="#c050b0" stroke-width="2.6" fill="none" stroke-linejoin="round" /><path d="M90 105.2 H279 M313 105.2 H558 M592 105.2 H602.5" stroke="#f2e614" stroke-width="1.2" fill="none" stroke-linejoin="round" /><path d="M46 161.2 H281.5 V129 H309 V161.2 H560 V129 H588 V161.2 H602.5" stroke="#5cc03c" stroke-width="2.4" fill="none" stroke-linejoin="round" /><rect x="281.50" y="126.00" width="27.50" height="8.50" fill="#5cc03c" /><rect x="297.98" y="124.50" width="2.00" height="2.00" fill="#5cc03c" /><rect x="290.39" y="124.50" width="2.00" height="2.00" fill="#5cc03c" /><rect x="289.83" y="124.50" width="2.00" height="2.00" fill="#5cc03c" /><rect x="285.46" y="124.50" width="2.00" height="2.00" fill="#5cc03c" /><rect x="303.00" y="124.50" width="2.00" height="2.00" fill="#5cc03c" /><rect x="298.38" y="124.50" width="2.00" height="2.00" fill="#5cc03c" /><rect x="300.42" y="124.50" width="2.00" height="2.00" fill="#5cc03c" /><rect x="285.82" y="124.50" width="2.00" height="2.00" fill="#5cc03c" /><rect x="560.00" y="126.00" width="28.00" height="8.50" fill="#5cc03c" /><rect x="571.41" y="124.50" width="2.00" height="2.00" fill="#5cc03c" /><rect x="580.11" y="124.50" width="2.00" height="2.00" fill="#5cc03c" /><rect x="575.06" y="124.50" width="2.00" height="2.00" fill="#5cc03c" /><rect x="563.28" y="124.50" width="2.00" height="2.00" fill="#5cc03c" /><rect x="572.01" y="124.50" width="2.00" height="2.00" fill="#5cc03c" /><rect x="583.01" y="124.50" width="2.00" height="2.00" fill="#5cc03c" /><rect x="566.19" y="124.50" width="2.00" height="2.00" fill="#5cc03c" /><rect x="564.98" y="124.50" width="2.00" height="2.00" fill="#5cc03c" /><path d="M46 143 H282.6 V136.2 H308.5 V143 H559.5 V136.2 H586 V143 H602.5" stroke="#64c8e6" stroke-width="2.2" fill="none" stroke-linejoin="round" /><path d="M246.3 85 V173 M357.6 85 V173" stroke="#f2e614" stroke-width="1.4" fill="none" stroke-linejoin="round" stroke-dasharray="2.3 2.3"/></g><g fill="#a09878"><rect x="56.53" y="95.53" width="1.2" height="1.2"/><rect x="67.66" y="95.53" width="1.2" height="1.2"/><rect x="78.79" y="95.53" width="1.2" height="1.2"/><rect x="89.92" y="95.53" width="1.2" height="1.2"/><rect x="101.05" y="95.53" width="1.2" height="1.2"/><rect x="112.18" y="95.53" width="1.2" height="1.2"/><rect x="123.31" y="95.53" width="1.2" height="1.2"/><rect x="134.44" y="95.53" width="1.2" height="1.2"/><rect x="145.57" y="95.53" width="1.2" height="1.2"/><rect x="156.70" y="95.53" width="1.2" height="1.2"/><rect x="167.83" y="95.53" width="1.2" height="1.2"/><rect x="178.96" y="95.53" width="1.2" height="1.2"/><rect x="190.09" y="95.53" width="1.2" height="1.2"/><rect x="201.22" y="95.53" width="1.2" height="1.2"/><rect x="212.35" y="95.53" width="1.2" height="1.2"/><rect x="223.48" y="95.53" width="1.2" height="1.2"/><rect x="234.61" y="95.53" width="1.2" height="1.2"/><rect x="245.74" y="95.53" width="1.2" height="1.2"/><rect x="256.87" y="95.53" width="1.2" height="1.2"/><rect x="268.00" y="95.53" width="1.2" height="1.2"/><rect x="279.13" y="95.53" width="1.2" height="1.2"/><rect x="290.26" y="95.53" width="1.2" height="1.2"/><rect x="301.39" y="95.53" width="1.2" height="1.2"/><rect x="312.52" y="95.53" width="1.2" height="1.2"/><rect x="323.65" y="95.53" width="1.2" height="1.2"/><rect x="334.78" y="95.53" width="1.2" height="1.2"/><rect x="345.91" y="95.53" width="1.2" height="1.2"/><rect x="357.04" y="95.53" width="1.2" height="1.2"/><rect x="368.17" y="95.53" width="1.2" height="1.2"/><rect x="379.30" y="95.53" width="1.2" height="1.2"/><rect x="390.43" y="95.53" width="1.2" height="1.2"/><rect x="401.56" y="95.53" width="1.2" height="1.2"/><rect x="412.69" y="95.53" width="1.2" height="1.2"/><rect x="423.82" y="95.53" width="1.2" height="1.2"/><rect x="434.95" y="95.53" width="1.2" height="1.2"/><rect x="446.08" y="95.53" width="1.2" height="1.2"/><rect x="457.21" y="95.53" width="1.2" height="1.2"/><rect x="468.34" y="95.53" width="1.2" height="1.2"/><rect x="479.47" y="95.53" width="1.2" height="1.2"/><rect x="490.60" y="95.53" width="1.2" height="1.2"/><rect x="501.73" y="95.53" width="1.2" height="1.2"/><rect x="512.86" y="95.53" width="1.2" height="1.2"/><rect x="523.99" y="95.53" width="1.2" height="1.2"/><rect x="535.12" y="95.53" width="1.2" height="1.2"/><rect x="546.25" y="95.53" width="1.2" height="1.2"/><rect x="557.38" y="95.53" width="1.2" height="1.2"/><rect x="568.51" y="95.53" width="1.2" height="1.2"/><rect x="579.64" y="95.53" width="1.2" height="1.2"/><rect x="590.77" y="95.53" width="1.2" height="1.2"/><rect x="56.53" y="107.05" width="1.2" height="1.2"/><rect x="67.66" y="107.05" width="1.2" height="1.2"/><rect x="78.79" y="107.05" width="1.2" height="1.2"/><rect x="89.92" y="107.05" width="1.2" height="1.2"/><rect x="101.05" y="107.05" width="1.2" height="1.2"/><rect x="112.18" y="107.05" width="1.2" height="1.2"/><rect x="123.31" y="107.05" width="1.2" height="1.2"/><rect x="134.44" y="107.05" width="1.2" height="1.2"/><rect x="145.57" y="107.05" width="1.2" height="1.2"/><rect x="156.70" y="107.05" width="1.2" height="1.2"/><rect x="167.83" y="107.05" width="1.2" height="1.2"/><rect x="178.96" y="107.05" width="1.2" height="1.2"/><rect x="190.09" y="107.05" width="1.2" height="1.2"/><rect x="201.22" y="107.05" width="1.2" height="1.2"/><rect x="212.35" y="107.05" width="1.2" height="1.2"/><rect x="223.48" y="107.05" width="1.2" height="1.2"/><rect x="234.61" y="107.05" width="1.2" height="1.2"/><rect x="245.74" y="107.05" width="1.2" height="1.2"/><rect x="256.87" y="107.05" width="1.2" height="1.2"/><rect x="268.00" y="107.05" width="1.2" height="1.2"/><rect x="279.13" y="107.05" width="1.2" height="1.2"/><rect x="290.26" y="107.05" width="1.2" height="1.2"/><rect x="301.39" y="107.05" width="1.2" height="1.2"/><rect x="312.52" y="107.05" width="1.2" height="1.2"/><rect x="323.65" y="107.05" width="1.2" height="1.2"/><rect x="334.78" y="107.05" width="1.2" height="1.2"/><rect x="345.91" y="107.05" width="1.2" height="1.2"/><rect x="357.04" y="107.05" width="1.2" height="1.2"/><rect x="368.17" y="107.05" width="1.2" height="1.2"/><rect x="379.30" y="107.05" width="1.2" height="1.2"/><rect x="390.43" y="107.05" width="1.2" height="1.2"/><rect x="401.56" y="107.05" width="1.2" height="1.2"/><rect x="412.69" y="107.05" width="1.2" height="1.2"/><rect x="423.82" y="107.05" width="1.2" height="1.2"/><rect x="434.95" y="107.05" width="1.2" height="1.2"/><rect x="446.08" y="107.05" width="1.2" height="1.2"/><rect x="457.21" y="107.05" width="1.2" height="1.2"/><rect x="468.34" y="107.05" width="1.2" height="1.2"/><rect x="479.47" y="107.05" width="1.2" height="1.2"/><rect x="490.60" y="107.05" width="1.2" height="1.2"/><rect x="501.73" y="107.05" width="1.2" height="1.2"/><rect x="512.86" y="107.05" width="1.2" height="1.2"/><rect x="523.99" y="107.05" width="1.2" height="1.2"/><rect x="535.12" y="107.05" width="1.2" height="1.2"/><rect x="546.25" y="107.05" width="1.2" height="1.2"/><rect x="557.38" y="107.05" width="1.2" height="1.2"/><rect x="568.51" y="107.05" width="1.2" height="1.2"/><rect x="579.64" y="107.05" width="1.2" height="1.2"/><rect x="590.77" y="107.05" width="1.2" height="1.2"/><rect x="56.53" y="118.58" width="1.2" height="1.2"/><rect x="67.66" y="118.58" width="1.2" height="1.2"/><rect x="78.79" y="118.58" width="1.2" height="1.2"/><rect x="89.92" y="118.58" width="1.2" height="1.2"/><rect x="101.05" y="118.58" width="1.2" height="1.2"/><rect x="112.18" y="118.58" width="1.2" height="1.2"/><rect x="123.31" y="118.58" width="1.2" height="1.2"/><rect x="134.44" y="118.58" width="1.2" height="1.2"/><rect x="145.57" y="118.58" width="1.2" height="1.2"/><rect x="156.70" y="118.58" width="1.2" height="1.2"/><rect x="167.83" y="118.58" width="1.2" height="1.2"/><rect x="178.96" y="118.58" width="1.2" height="1.2"/><rect x="190.09" y="118.58" width="1.2" height="1.2"/><rect x="201.22" y="118.58" width="1.2" height="1.2"/><rect x="212.35" y="118.58" width="1.2" height="1.2"/><rect x="223.48" y="118.58" width="1.2" height="1.2"/><rect x="234.61" y="118.58" width="1.2" height="1.2"/><rect x="245.74" y="118.58" width="1.2" height="1.2"/><rect x="256.87" y="118.58" width="1.2" height="1.2"/><rect x="268.00" y="118.58" width="1.2" height="1.2"/><rect x="279.13" y="118.58" width="1.2" height="1.2"/><rect x="290.26" y="118.58" width="1.2" height="1.2"/><rect x="301.39" y="118.58" width="1.2" height="1.2"/><rect x="312.52" y="118.58" width="1.2" height="1.2"/><rect x="323.65" y="118.58" width="1.2" height="1.2"/><rect x="334.78" y="118.58" width="1.2" height="1.2"/><rect x="345.91" y="118.58" width="1.2" height="1.2"/><rect x="357.04" y="118.58" width="1.2" height="1.2"/><rect x="368.17" y="118.58" width="1.2" height="1.2"/><rect x="379.30" y="118.58" width="1.2" height="1.2"/><rect x="390.43" y="118.58" width="1.2" height="1.2"/><rect x="401.56" y="118.58" width="1.2" height="1.2"/><rect x="412.69" y="118.58" width="1.2" height="1.2"/><rect x="423.82" y="118.58" width="1.2" height="1.2"/><rect x="434.95" y="118.58" width="1.2" height="1.2"/><rect x="446.08" y="118.58" width="1.2" height="1.2"/><rect x="457.21" y="118.58" width="1.2" height="1.2"/><rect x="468.34" y="118.58" width="1.2" height="1.2"/><rect x="479.47" y="118.58" width="1.2" height="1.2"/><rect x="490.60" y="118.58" width="1.2" height="1.2"/><rect x="501.73" y="118.58" width="1.2" height="1.2"/><rect x="512.86" y="118.58" width="1.2" height="1.2"/><rect x="523.99" y="118.58" width="1.2" height="1.2"/><rect x="535.12" y="118.58" width="1.2" height="1.2"/><rect x="546.25" y="118.58" width="1.2" height="1.2"/><rect x="557.38" y="118.58" width="1.2" height="1.2"/><rect x="568.51" y="118.58" width="1.2" height="1.2"/><rect x="579.64" y="118.58" width="1.2" height="1.2"/><rect x="590.77" y="118.58" width="1.2" height="1.2"/><rect x="56.53" y="141.63" width="1.2" height="1.2"/><rect x="67.66" y="141.63" width="1.2" height="1.2"/><rect x="78.79" y="141.63" width="1.2" height="1.2"/><rect x="89.92" y="141.63" width="1.2" height="1.2"/><rect x="101.05" y="141.63" width="1.2" height="1.2"/><rect x="112.18" y="141.63" width="1.2" height="1.2"/><rect x="123.31" y="141.63" width="1.2" height="1.2"/><rect x="134.44" y="141.63" width="1.2" height="1.2"/><rect x="145.57" y="141.63" width="1.2" height="1.2"/><rect x="156.70" y="141.63" width="1.2" height="1.2"/><rect x="167.83" y="141.63" width="1.2" height="1.2"/><rect x="178.96" y="141.63" width="1.2" height="1.2"/><rect x="190.09" y="141.63" width="1.2" height="1.2"/><rect x="201.22" y="141.63" width="1.2" height="1.2"/><rect x="212.35" y="141.63" width="1.2" height="1.2"/><rect x="223.48" y="141.63" width="1.2" height="1.2"/><rect x="234.61" y="141.63" width="1.2" height="1.2"/><rect x="245.74" y="141.63" width="1.2" height="1.2"/><rect x="256.87" y="141.63" width="1.2" height="1.2"/><rect x="268.00" y="141.63" width="1.2" height="1.2"/><rect x="279.13" y="141.63" width="1.2" height="1.2"/><rect x="290.26" y="141.63" width="1.2" height="1.2"/><rect x="301.39" y="141.63" width="1.2" height="1.2"/><rect x="312.52" y="141.63" width="1.2" height="1.2"/><rect x="323.65" y="141.63" width="1.2" height="1.2"/><rect x="334.78" y="141.63" width="1.2" height="1.2"/><rect x="345.91" y="141.63" width="1.2" height="1.2"/><rect x="357.04" y="141.63" width="1.2" height="1.2"/><rect x="368.17" y="141.63" width="1.2" height="1.2"/><rect x="379.30" y="141.63" width="1.2" height="1.2"/><rect x="390.43" y="141.63" width="1.2" height="1.2"/><rect x="401.56" y="141.63" width="1.2" height="1.2"/><rect x="412.69" y="141.63" width="1.2" height="1.2"/><rect x="423.82" y="141.63" width="1.2" height="1.2"/><rect x="434.95" y="141.63" width="1.2" height="1.2"/><rect x="446.08" y="141.63" width="1.2" height="1.2"/><rect x="457.21" y="141.63" width="1.2" height="1.2"/><rect x="468.34" y="141.63" width="1.2" height="1.2"/><rect x="479.47" y="141.63" width="1.2" height="1.2"/><rect x="490.60" y="141.63" width="1.2" height="1.2"/><rect x="501.73" y="141.63" width="1.2" height="1.2"/><rect x="512.86" y="141.63" width="1.2" height="1.2"/><rect x="523.99" y="141.63" width="1.2" height="1.2"/><rect x="535.12" y="141.63" width="1.2" height="1.2"/><rect x="546.25" y="141.63" width="1.2" height="1.2"/><rect x="557.38" y="141.63" width="1.2" height="1.2"/><rect x="568.51" y="141.63" width="1.2" height="1.2"/><rect x="579.64" y="141.63" width="1.2" height="1.2"/><rect x="590.77" y="141.63" width="1.2" height="1.2"/><rect x="56.53" y="153.15" width="1.2" height="1.2"/><rect x="67.66" y="153.15" width="1.2" height="1.2"/><rect x="78.79" y="153.15" width="1.2" height="1.2"/><rect x="89.92" y="153.15" width="1.2" height="1.2"/><rect x="101.05" y="153.15" width="1.2" height="1.2"/><rect x="112.18" y="153.15" width="1.2" height="1.2"/><rect x="123.31" y="153.15" width="1.2" height="1.2"/><rect x="134.44" y="153.15" width="1.2" height="1.2"/><rect x="145.57" y="153.15" width="1.2" height="1.2"/><rect x="156.70" y="153.15" width="1.2" height="1.2"/><rect x="167.83" y="153.15" width="1.2" height="1.2"/><rect x="178.96" y="153.15" width="1.2" height="1.2"/><rect x="190.09" y="153.15" width="1.2" height="1.2"/><rect x="201.22" y="153.15" width="1.2" height="1.2"/><rect x="212.35" y="153.15" width="1.2" height="1.2"/><rect x="223.48" y="153.15" width="1.2" height="1.2"/><rect x="234.61" y="153.15" width="1.2" height="1.2"/><rect x="245.74" y="153.15" width="1.2" height="1.2"/><rect x="256.87" y="153.15" width="1.2" height="1.2"/><rect x="268.00" y="153.15" width="1.2" height="1.2"/><rect x="279.13" y="153.15" width="1.2" height="1.2"/><rect x="290.26" y="153.15" width="1.2" height="1.2"/><rect x="301.39" y="153.15" width="1.2" height="1.2"/><rect x="312.52" y="153.15" width="1.2" height="1.2"/><rect x="323.65" y="153.15" width="1.2" height="1.2"/><rect x="334.78" y="153.15" width="1.2" height="1.2"/><rect x="345.91" y="153.15" width="1.2" height="1.2"/><rect x="357.04" y="153.15" width="1.2" height="1.2"/><rect x="368.17" y="153.15" width="1.2" height="1.2"/><rect x="379.30" y="153.15" width="1.2" height="1.2"/><rect x="390.43" y="153.15" width="1.2" height="1.2"/><rect x="401.56" y="153.15" width="1.2" height="1.2"/><rect x="412.69" y="153.15" width="1.2" height="1.2"/><rect x="423.82" y="153.15" width="1.2" height="1.2"/><rect x="434.95" y="153.15" width="1.2" height="1.2"/><rect x="446.08" y="153.15" width="1.2" height="1.2"/><rect x="457.21" y="153.15" width="1.2" height="1.2"/><rect x="468.34" y="153.15" width="1.2" height="1.2"/><rect x="479.47" y="153.15" width="1.2" height="1.2"/><rect x="490.60" y="153.15" width="1.2" height="1.2"/><rect x="501.73" y="153.15" width="1.2" height="1.2"/><rect x="512.86" y="153.15" width="1.2" height="1.2"/><rect x="523.99" y="153.15" width="1.2" height="1.2"/><rect x="535.12" y="153.15" width="1.2" height="1.2"/><rect x="546.25" y="153.15" width="1.2" height="1.2"/><rect x="557.38" y="153.15" width="1.2" height="1.2"/><rect x="568.51" y="153.15" width="1.2" height="1.2"/><rect x="579.64" y="153.15" width="1.2" height="1.2"/><rect x="590.77" y="153.15" width="1.2" height="1.2"/><rect x="56.53" y="164.68" width="1.2" height="1.2"/><rect x="67.66" y="164.68" width="1.2" height="1.2"/><rect x="78.79" y="164.68" width="1.2" height="1.2"/><rect x="89.92" y="164.68" width="1.2" height="1.2"/><rect x="101.05" y="164.68" width="1.2" height="1.2"/><rect x="112.18" y="164.68" width="1.2" height="1.2"/><rect x="123.31" y="164.68" width="1.2" height="1.2"/><rect x="134.44" y="164.68" width="1.2" height="1.2"/><rect x="145.57" y="164.68" width="1.2" height="1.2"/><rect x="156.70" y="164.68" width="1.2" height="1.2"/><rect x="167.83" y="164.68" width="1.2" height="1.2"/><rect x="178.96" y="164.68" width="1.2" height="1.2"/><rect x="190.09" y="164.68" width="1.2" height="1.2"/><rect x="201.22" y="164.68" width="1.2" height="1.2"/><rect x="212.35" y="164.68" width="1.2" height="1.2"/><rect x="223.48" y="164.68" width="1.2" height="1.2"/><rect x="234.61" y="164.68" width="1.2" height="1.2"/><rect x="245.74" y="164.68" width="1.2" height="1.2"/><rect x="256.87" y="164.68" width="1.2" height="1.2"/><rect x="268.00" y="164.68" width="1.2" height="1.2"/><rect x="279.13" y="164.68" width="1.2" height="1.2"/><rect x="290.26" y="164.68" width="1.2" height="1.2"/><rect x="301.39" y="164.68" width="1.2" height="1.2"/><rect x="312.52" y="164.68" width="1.2" height="1.2"/><rect x="323.65" y="164.68" width="1.2" height="1.2"/><rect x="334.78" y="164.68" width="1.2" height="1.2"/><rect x="345.91" y="164.68" width="1.2" height="1.2"/><rect x="357.04" y="164.68" width="1.2" height="1.2"/><rect x="368.17" y="164.68" width="1.2" height="1.2"/><rect x="379.30" y="164.68" width="1.2" height="1.2"/><rect x="390.43" y="164.68" width="1.2" height="1.2"/><rect x="401.56" y="164.68" width="1.2" height="1.2"/><rect x="412.69" y="164.68" width="1.2" height="1.2"/><rect x="423.82" y="164.68" width="1.2" height="1.2"/><rect x="434.95" y="164.68" width="1.2" height="1.2"/><rect x="446.08" y="164.68" width="1.2" height="1.2"/><rect x="457.21" y="164.68" width="1.2" height="1.2"/><rect x="468.34" y="164.68" width="1.2" height="1.2"/><rect x="479.47" y="164.68" width="1.2" height="1.2"/><rect x="490.60" y="164.68" width="1.2" height="1.2"/><rect x="501.73" y="164.68" width="1.2" height="1.2"/><rect x="512.86" y="164.68" width="1.2" height="1.2"/><rect x="523.99" y="164.68" width="1.2" height="1.2"/><rect x="535.12" y="164.68" width="1.2" height="1.2"/><rect x="546.25" y="164.68" width="1.2" height="1.2"/><rect x="557.38" y="164.68" width="1.2" height="1.2"/><rect x="568.51" y="164.68" width="1.2" height="1.2"/><rect x="579.64" y="164.68" width="1.2" height="1.2"/><rect x="590.77" y="164.68" width="1.2" height="1.2"/><rect x="101.05" y="86.30" width="1.2" height="1.2"/><rect x="101.05" y="88.60" width="1.2" height="1.2"/><rect x="101.05" y="90.90" width="1.2" height="1.2"/><rect x="101.05" y="93.20" width="1.2" height="1.2"/><rect x="101.05" y="95.50" width="1.2" height="1.2"/><rect x="101.05" y="97.80" width="1.2" height="1.2"/><rect x="101.05" y="100.10" width="1.2" height="1.2"/><rect x="101.05" y="102.40" width="1.2" height="1.2"/><rect x="101.05" y="104.70" width="1.2" height="1.2"/><rect x="101.05" y="107.00" width="1.2" height="1.2"/><rect x="101.05" y="109.30" width="1.2" height="1.2"/><rect x="101.05" y="111.60" width="1.2" height="1.2"/><rect x="101.05" y="113.90" width="1.2" height="1.2"/><rect x="101.05" y="116.20" width="1.2" height="1.2"/><rect x="101.05" y="118.50" width="1.2" height="1.2"/><rect x="101.05" y="120.80" width="1.2" height="1.2"/><rect x="101.05" y="123.10" width="1.2" height="1.2"/><rect x="101.05" y="125.40" width="1.2" height="1.2"/><rect x="101.05" y="127.70" width="1.2" height="1.2"/><rect x="101.05" y="130.00" width="1.2" height="1.2"/><rect x="101.05" y="132.30" width="1.2" height="1.2"/><rect x="101.05" y="134.60" width="1.2" height="1.2"/><rect x="101.05" y="136.90" width="1.2" height="1.2"/><rect x="101.05" y="139.20" width="1.2" height="1.2"/><rect x="101.05" y="141.50" width="1.2" height="1.2"/><rect x="101.05" y="143.80" width="1.2" height="1.2"/><rect x="101.05" y="146.10" width="1.2" height="1.2"/><rect x="101.05" y="148.40" width="1.2" height="1.2"/><rect x="101.05" y="150.70" width="1.2" height="1.2"/><rect x="101.05" y="153.00" width="1.2" height="1.2"/><rect x="101.05" y="155.30" width="1.2" height="1.2"/><rect x="101.05" y="157.60" width="1.2" height="1.2"/><rect x="101.05" y="159.90" width="1.2" height="1.2"/><rect x="101.05" y="162.20" width="1.2" height="1.2"/><rect x="101.05" y="164.50" width="1.2" height="1.2"/><rect x="101.05" y="166.80" width="1.2" height="1.2"/><rect x="101.05" y="169.10" width="1.2" height="1.2"/><rect x="101.05" y="171.40" width="1.2" height="1.2"/><rect x="101.05" y="173.70" width="1.2" height="1.2"/><rect x="156.70" y="86.30" width="1.2" height="1.2"/><rect x="156.70" y="88.60" width="1.2" height="1.2"/><rect x="156.70" y="90.90" width="1.2" height="1.2"/><rect x="156.70" y="93.20" width="1.2" height="1.2"/><rect x="156.70" y="95.50" width="1.2" height="1.2"/><rect x="156.70" y="97.80" width="1.2" height="1.2"/><rect x="156.70" y="100.10" width="1.2" height="1.2"/><rect x="156.70" y="102.40" width="1.2" height="1.2"/><rect x="156.70" y="104.70" width="1.2" height="1.2"/><rect x="156.70" y="107.00" width="1.2" height="1.2"/><rect x="156.70" y="109.30" width="1.2" height="1.2"/><rect x="156.70" y="111.60" width="1.2" height="1.2"/><rect x="156.70" y="113.90" width="1.2" height="1.2"/><rect x="156.70" y="116.20" width="1.2" height="1.2"/><rect x="156.70" y="118.50" width="1.2" height="1.2"/><rect x="156.70" y="120.80" width="1.2" height="1.2"/><rect x="156.70" y="123.10" width="1.2" height="1.2"/><rect x="156.70" y="125.40" width="1.2" height="1.2"/><rect x="156.70" y="127.70" width="1.2" height="1.2"/><rect x="156.70" y="130.00" width="1.2" height="1.2"/><rect x="156.70" y="132.30" width="1.2" height="1.2"/><rect x="156.70" y="134.60" width="1.2" height="1.2"/><rect x="156.70" y="136.90" width="1.2" height="1.2"/><rect x="156.70" y="139.20" width="1.2" height="1.2"/><rect x="156.70" y="141.50" width="1.2" height="1.2"/><rect x="156.70" y="143.80" width="1.2" height="1.2"/><rect x="156.70" y="146.10" width="1.2" height="1.2"/><rect x="156.70" y="148.40" width="1.2" height="1.2"/><rect x="156.70" y="150.70" width="1.2" height="1.2"/><rect x="156.70" y="153.00" width="1.2" height="1.2"/><rect x="156.70" y="155.30" width="1.2" height="1.2"/><rect x="156.70" y="157.60" width="1.2" height="1.2"/><rect x="156.70" y="159.90" width="1.2" height="1.2"/><rect x="156.70" y="162.20" width="1.2" height="1.2"/><rect x="156.70" y="164.50" width="1.2" height="1.2"/><rect x="156.70" y="166.80" width="1.2" height="1.2"/><rect x="156.70" y="169.10" width="1.2" height="1.2"/><rect x="156.70" y="171.40" width="1.2" height="1.2"/><rect x="156.70" y="173.70" width="1.2" height="1.2"/><rect x="212.35" y="86.30" width="1.2" height="1.2"/><rect x="212.35" y="88.60" width="1.2" height="1.2"/><rect x="212.35" y="90.90" width="1.2" height="1.2"/><rect x="212.35" y="93.20" width="1.2" height="1.2"/><rect x="212.35" y="95.50" width="1.2" height="1.2"/><rect x="212.35" y="97.80" width="1.2" height="1.2"/><rect x="212.35" y="100.10" width="1.2" height="1.2"/><rect x="212.35" y="102.40" width="1.2" height="1.2"/><rect x="212.35" y="104.70" width="1.2" height="1.2"/><rect x="212.35" y="107.00" width="1.2" height="1.2"/><rect x="212.35" y="109.30" width="1.2" height="1.2"/><rect x="212.35" y="111.60" width="1.2" height="1.2"/><rect x="212.35" y="113.90" width="1.2" height="1.2"/><rect x="212.35" y="116.20" width="1.2" height="1.2"/><rect x="212.35" y="118.50" width="1.2" height="1.2"/><rect x="212.35" y="120.80" width="1.2" height="1.2"/><rect x="212.35" y="123.10" width="1.2" height="1.2"/><rect x="212.35" y="125.40" width="1.2" height="1.2"/><rect x="212.35" y="127.70" width="1.2" height="1.2"/><rect x="212.35" y="130.00" width="1.2" height="1.2"/><rect x="212.35" y="132.30" width="1.2" height="1.2"/><rect x="212.35" y="134.60" width="1.2" height="1.2"/><rect x="212.35" y="136.90" width="1.2" height="1.2"/><rect x="212.35" y="139.20" width="1.2" height="1.2"/><rect x="212.35" y="141.50" width="1.2" height="1.2"/><rect x="212.35" y="143.80" width="1.2" height="1.2"/><rect x="212.35" y="146.10" width="1.2" height="1.2"/><rect x="212.35" y="148.40" width="1.2" height="1.2"/><rect x="212.35" y="150.70" width="1.2" height="1.2"/><rect x="212.35" y="153.00" width="1.2" height="1.2"/><rect x="212.35" y="155.30" width="1.2" height="1.2"/><rect x="212.35" y="157.60" width="1.2" height="1.2"/><rect x="212.35" y="159.90" width="1.2" height="1.2"/><rect x="212.35" y="162.20" width="1.2" height="1.2"/><rect x="212.35" y="164.50" width="1.2" height="1.2"/><rect x="212.35" y="166.80" width="1.2" height="1.2"/><rect x="212.35" y="169.10" width="1.2" height="1.2"/><rect x="212.35" y="171.40" width="1.2" height="1.2"/><rect x="212.35" y="173.70" width="1.2" height="1.2"/><rect x="268.00" y="86.30" width="1.2" height="1.2"/><rect x="268.00" y="88.60" width="1.2" height="1.2"/><rect x="268.00" y="90.90" width="1.2" height="1.2"/><rect x="268.00" y="93.20" width="1.2" height="1.2"/><rect x="268.00" y="95.50" width="1.2" height="1.2"/><rect x="268.00" y="97.80" width="1.2" height="1.2"/><rect x="268.00" y="100.10" width="1.2" height="1.2"/><rect x="268.00" y="102.40" width="1.2" height="1.2"/><rect x="268.00" y="104.70" width="1.2" height="1.2"/><rect x="268.00" y="107.00" width="1.2" height="1.2"/><rect x="268.00" y="109.30" width="1.2" height="1.2"/><rect x="268.00" y="111.60" width="1.2" height="1.2"/><rect x="268.00" y="113.90" width="1.2" height="1.2"/><rect x="268.00" y="116.20" width="1.2" height="1.2"/><rect x="268.00" y="118.50" width="1.2" height="1.2"/><rect x="268.00" y="120.80" width="1.2" height="1.2"/><rect x="268.00" y="123.10" width="1.2" height="1.2"/><rect x="268.00" y="125.40" width="1.2" height="1.2"/><rect x="268.00" y="127.70" width="1.2" height="1.2"/><rect x="268.00" y="130.00" width="1.2" height="1.2"/><rect x="268.00" y="132.30" width="1.2" height="1.2"/><rect x="268.00" y="134.60" width="1.2" height="1.2"/><rect x="268.00" y="136.90" width="1.2" height="1.2"/><rect x="268.00" y="139.20" width="1.2" height="1.2"/><rect x="268.00" y="141.50" width="1.2" height="1.2"/><rect x="268.00" y="143.80" width="1.2" height="1.2"/><rect x="268.00" y="146.10" width="1.2" height="1.2"/><rect x="268.00" y="148.40" width="1.2" height="1.2"/><rect x="268.00" y="150.70" width="1.2" height="1.2"/><rect x="268.00" y="153.00" width="1.2" height="1.2"/><rect x="268.00" y="155.30" width="1.2" height="1.2"/><rect x="268.00" y="157.60" width="1.2" height="1.2"/><rect x="268.00" y="159.90" width="1.2" height="1.2"/><rect x="268.00" y="162.20" width="1.2" height="1.2"/><rect x="268.00" y="164.50" width="1.2" height="1.2"/><rect x="268.00" y="166.80" width="1.2" height="1.2"/><rect x="268.00" y="169.10" width="1.2" height="1.2"/><rect x="268.00" y="171.40" width="1.2" height="1.2"/><rect x="268.00" y="173.70" width="1.2" height="1.2"/><rect x="379.30" y="86.30" width="1.2" height="1.2"/><rect x="379.30" y="88.60" width="1.2" height="1.2"/><rect x="379.30" y="90.90" width="1.2" height="1.2"/><rect x="379.30" y="93.20" width="1.2" height="1.2"/><rect x="379.30" y="95.50" width="1.2" height="1.2"/><rect x="379.30" y="97.80" width="1.2" height="1.2"/><rect x="379.30" y="100.10" width="1.2" height="1.2"/><rect x="379.30" y="102.40" width="1.2" height="1.2"/><rect x="379.30" y="104.70" width="1.2" height="1.2"/><rect x="379.30" y="107.00" width="1.2" height="1.2"/><rect x="379.30" y="109.30" width="1.2" height="1.2"/><rect x="379.30" y="111.60" width="1.2" height="1.2"/><rect x="379.30" y="113.90" width="1.2" height="1.2"/><rect x="379.30" y="116.20" width="1.2" height="1.2"/><rect x="379.30" y="118.50" width="1.2" height="1.2"/><rect x="379.30" y="120.80" width="1.2" height="1.2"/><rect x="379.30" y="123.10" width="1.2" height="1.2"/><rect x="379.30" y="125.40" width="1.2" height="1.2"/><rect x="379.30" y="127.70" width="1.2" height="1.2"/><rect x="379.30" y="130.00" width="1.2" height="1.2"/><rect x="379.30" y="132.30" width="1.2" height="1.2"/><rect x="379.30" y="134.60" width="1.2" height="1.2"/><rect x="379.30" y="136.90" width="1.2" height="1.2"/><rect x="379.30" y="139.20" width="1.2" height="1.2"/><rect x="379.30" y="141.50" width="1.2" height="1.2"/><rect x="379.30" y="143.80" width="1.2" height="1.2"/><rect x="379.30" y="146.10" width="1.2" height="1.2"/><rect x="379.30" y="148.40" width="1.2" height="1.2"/><rect x="379.30" y="150.70" width="1.2" height="1.2"/><rect x="379.30" y="153.00" width="1.2" height="1.2"/><rect x="379.30" y="155.30" width="1.2" height="1.2"/><rect x="379.30" y="157.60" width="1.2" height="1.2"/><rect x="379.30" y="159.90" width="1.2" height="1.2"/><rect x="379.30" y="162.20" width="1.2" height="1.2"/><rect x="379.30" y="164.50" width="1.2" height="1.2"/><rect x="379.30" y="166.80" width="1.2" height="1.2"/><rect x="379.30" y="169.10" width="1.2" height="1.2"/><rect x="379.30" y="171.40" width="1.2" height="1.2"/><rect x="379.30" y="173.70" width="1.2" height="1.2"/><rect x="434.95" y="86.30" width="1.2" height="1.2"/><rect x="434.95" y="88.60" width="1.2" height="1.2"/><rect x="434.95" y="90.90" width="1.2" height="1.2"/><rect x="434.95" y="93.20" width="1.2" height="1.2"/><rect x="434.95" y="95.50" width="1.2" height="1.2"/><rect x="434.95" y="97.80" width="1.2" height="1.2"/><rect x="434.95" y="100.10" width="1.2" height="1.2"/><rect x="434.95" y="102.40" width="1.2" height="1.2"/><rect x="434.95" y="104.70" width="1.2" height="1.2"/><rect x="434.95" y="107.00" width="1.2" height="1.2"/><rect x="434.95" y="109.30" width="1.2" height="1.2"/><rect x="434.95" y="111.60" width="1.2" height="1.2"/><rect x="434.95" y="113.90" width="1.2" height="1.2"/><rect x="434.95" y="116.20" width="1.2" height="1.2"/><rect x="434.95" y="118.50" width="1.2" height="1.2"/><rect x="434.95" y="120.80" width="1.2" height="1.2"/><rect x="434.95" y="123.10" width="1.2" height="1.2"/><rect x="434.95" y="125.40" width="1.2" height="1.2"/><rect x="434.95" y="127.70" width="1.2" height="1.2"/><rect x="434.95" y="130.00" width="1.2" height="1.2"/><rect x="434.95" y="132.30" width="1.2" height="1.2"/><rect x="434.95" y="134.60" width="1.2" height="1.2"/><rect x="434.95" y="136.90" width="1.2" height="1.2"/><rect x="434.95" y="139.20" width="1.2" height="1.2"/><rect x="434.95" y="141.50" width="1.2" height="1.2"/><rect x="434.95" y="143.80" width="1.2" height="1.2"/><rect x="434.95" y="146.10" width="1.2" height="1.2"/><rect x="434.95" y="148.40" width="1.2" height="1.2"/><rect x="434.95" y="150.70" width="1.2" height="1.2"/><rect x="434.95" y="153.00" width="1.2" height="1.2"/><rect x="434.95" y="155.30" width="1.2" height="1.2"/><rect x="434.95" y="157.60" width="1.2" height="1.2"/><rect x="434.95" y="159.90" width="1.2" height="1.2"/><rect x="434.95" y="162.20" width="1.2" height="1.2"/><rect x="434.95" y="164.50" width="1.2" height="1.2"/><rect x="434.95" y="166.80" width="1.2" height="1.2"/><rect x="434.95" y="169.10" width="1.2" height="1.2"/><rect x="434.95" y="171.40" width="1.2" height="1.2"/><rect x="434.95" y="173.70" width="1.2" height="1.2"/><rect x="490.60" y="86.30" width="1.2" height="1.2"/><rect x="490.60" y="88.60" width="1.2" height="1.2"/><rect x="490.60" y="90.90" width="1.2" height="1.2"/><rect x="490.60" y="93.20" width="1.2" height="1.2"/><rect x="490.60" y="95.50" width="1.2" height="1.2"/><rect x="490.60" y="97.80" width="1.2" height="1.2"/><rect x="490.60" y="100.10" width="1.2" height="1.2"/><rect x="490.60" y="102.40" width="1.2" height="1.2"/><rect x="490.60" y="104.70" width="1.2" height="1.2"/><rect x="490.60" y="107.00" width="1.2" height="1.2"/><rect x="490.60" y="109.30" width="1.2" height="1.2"/><rect x="490.60" y="111.60" width="1.2" height="1.2"/><rect x="490.60" y="113.90" width="1.2" height="1.2"/><rect x="490.60" y="116.20" width="1.2" height="1.2"/><rect x="490.60" y="118.50" width="1.2" height="1.2"/><rect x="490.60" y="120.80" width="1.2" height="1.2"/><rect x="490.60" y="123.10" width="1.2" height="1.2"/><rect x="490.60" y="125.40" width="1.2" height="1.2"/><rect x="490.60" y="127.70" width="1.2" height="1.2"/><rect x="490.60" y="130.00" width="1.2" height="1.2"/><rect x="490.60" y="132.30" width="1.2" height="1.2"/><rect x="490.60" y="134.60" width="1.2" height="1.2"/><rect x="490.60" y="136.90" width="1.2" height="1.2"/><rect x="490.60" y="139.20" width="1.2" height="1.2"/><rect x="490.60" y="141.50" width="1.2" height="1.2"/><rect x="490.60" y="143.80" width="1.2" height="1.2"/><rect x="490.60" y="146.10" width="1.2" height="1.2"/><rect x="490.60" y="148.40" width="1.2" height="1.2"/><rect x="490.60" y="150.70" width="1.2" height="1.2"/><rect x="490.60" y="153.00" width="1.2" height="1.2"/><rect x="490.60" y="155.30" width="1.2" height="1.2"/><rect x="490.60" y="157.60" width="1.2" height="1.2"/><rect x="490.60" y="159.90" width="1.2" height="1.2"/><rect x="490.60" y="162.20" width="1.2" height="1.2"/><rect x="490.60" y="164.50" width="1.2" height="1.2"/><rect x="490.60" y="166.80" width="1.2" height="1.2"/><rect x="490.60" y="169.10" width="1.2" height="1.2"/><rect x="490.60" y="171.40" width="1.2" height="1.2"/><rect x="490.60" y="173.70" width="1.2" height="1.2"/><rect x="546.25" y="86.30" width="1.2" height="1.2"/><rect x="546.25" y="88.60" width="1.2" height="1.2"/><rect x="546.25" y="90.90" width="1.2" height="1.2"/><rect x="546.25" y="93.20" width="1.2" height="1.2"/><rect x="546.25" y="95.50" width="1.2" height="1.2"/><rect x="546.25" y="97.80" width="1.2" height="1.2"/><rect x="546.25" y="100.10" width="1.2" height="1.2"/><rect x="546.25" y="102.40" width="1.2" height="1.2"/><rect x="546.25" y="104.70" width="1.2" height="1.2"/><rect x="546.25" y="107.00" width="1.2" height="1.2"/><rect x="546.25" y="109.30" width="1.2" height="1.2"/><rect x="546.25" y="111.60" width="1.2" height="1.2"/><rect x="546.25" y="113.90" width="1.2" height="1.2"/><rect x="546.25" y="116.20" width="1.2" height="1.2"/><rect x="546.25" y="118.50" width="1.2" height="1.2"/><rect x="546.25" y="120.80" width="1.2" height="1.2"/><rect x="546.25" y="123.10" width="1.2" height="1.2"/><rect x="546.25" y="125.40" width="1.2" height="1.2"/><rect x="546.25" y="127.70" width="1.2" height="1.2"/><rect x="546.25" y="130.00" width="1.2" height="1.2"/><rect x="546.25" y="132.30" width="1.2" height="1.2"/><rect x="546.25" y="134.60" width="1.2" height="1.2"/><rect x="546.25" y="136.90" width="1.2" height="1.2"/><rect x="546.25" y="139.20" width="1.2" height="1.2"/><rect x="546.25" y="141.50" width="1.2" height="1.2"/><rect x="546.25" y="143.80" width="1.2" height="1.2"/><rect x="546.25" y="146.10" width="1.2" height="1.2"/><rect x="546.25" y="148.40" width="1.2" height="1.2"/><rect x="546.25" y="150.70" width="1.2" height="1.2"/><rect x="546.25" y="153.00" width="1.2" height="1.2"/><rect x="546.25" y="155.30" width="1.2" height="1.2"/><rect x="546.25" y="157.60" width="1.2" height="1.2"/><rect x="546.25" y="159.90" width="1.2" height="1.2"/><rect x="546.25" y="162.20" width="1.2" height="1.2"/><rect x="546.25" y="164.50" width="1.2" height="1.2"/><rect x="546.25" y="166.80" width="1.2" height="1.2"/><rect x="546.25" y="169.10" width="1.2" height="1.2"/><rect x="546.25" y="171.40" width="1.2" height="1.2"/><rect x="546.25" y="173.70" width="1.2" height="1.2"/></g><rect x="46.00" y="84.60" width="556.50" height="92.20" fill="none" stroke="#a09878" stroke-width="1.35"/><line x1="324.25" y1="84.60" x2="324.25" y2="176.80" stroke="#a09878" stroke-width="1.3"/><line x1="46.00" y1="130.70" x2="602.50" y2="130.70" stroke="#a09878" stroke-width="1.3"/><path d="M46.00 89.20h5M602.50 89.20h-5M319.25 89.20h10M46.00 93.80h5M602.50 93.80h-5M319.25 93.80h10M46.00 98.40h5M602.50 98.40h-5M319.25 98.40h10M46.00 103.00h5M602.50 103.00h-5M319.25 103.00h10M46.00 107.60h5M602.50 107.60h-5M319.25 107.60h10M46.00 112.20h5M602.50 112.20h-5M319.25 112.20h10M46.00 116.80h5M602.50 116.80h-5M319.25 116.80h10M46.00 121.40h5M602.50 121.40h-5M319.25 121.40h10M46.00 126.00h5M602.50 126.00h-5M319.25 126.00h10M46.00 130.60h5M602.50 130.60h-5M319.25 130.60h10M46.00 135.20h5M602.50 135.20h-5M319.25 135.20h10M46.00 139.80h5M602.50 139.80h-5M319.25 139.80h10M46.00 144.40h5M602.50 144.40h-5M319.25 144.40h10M46.00 149.00h5M602.50 149.00h-5M319.25 149.00h10M46.00 153.60h5M602.50 153.60h-5M319.25 153.60h10M46.00 158.20h5M602.50 158.20h-5M319.25 158.20h10M46.00 162.80h5M602.50 162.80h-5M319.25 162.80h10M46.00 167.40h5M602.50 167.40h-5M319.25 167.40h10M46.00 172.00h5M602.50 172.00h-5M319.25 172.00h10M57.13 84.60v3M57.13 176.80v-3M57.13 127.70v6.00M68.26 84.60v3M68.26 176.80v-3M68.26 127.70v6.00M79.39 84.60v3M79.39 176.80v-3M79.39 127.70v6.00M90.52 84.60v3M90.52 176.80v-3M90.52 127.70v6.00M101.65 84.60v3M101.65 176.80v-3M101.65 127.70v6.00M112.78 84.60v3M112.78 176.80v-3M112.78 127.70v6.00M123.91 84.60v3M123.91 176.80v-3M123.91 127.70v6.00M135.04 84.60v3M135.04 176.80v-3M135.04 127.70v6.00M146.17 84.60v3M146.17 176.80v-3M146.17 127.70v6.00M157.30 84.60v3M157.30 176.80v-3M157.30 127.70v6.00M168.43 84.60v3M168.43 176.80v-3M168.43 127.70v6.00M179.56 84.60v3M179.56 176.80v-3M179.56 127.70v6.00M190.69 84.60v3M190.69 176.80v-3M190.69 127.70v6.00M201.82 84.60v3M201.82 176.80v-3M201.82 127.70v6.00M212.95 84.60v3M212.95 176.80v-3M212.95 127.70v6.00M224.08 84.60v3M224.08 176.80v-3M224.08 127.70v6.00M235.21 84.60v3M235.21 176.80v-3M235.21 127.70v6.00M246.34 84.60v3M246.34 176.80v-3M246.34 127.70v6.00M257.47 84.60v3M257.47 176.80v-3M257.47 127.70v6.00M268.60 84.60v3M268.60 176.80v-3M268.60 127.70v6.00M279.73 84.60v3M279.73 176.80v-3M279.73 127.70v6.00M290.86 84.60v3M290.86 176.80v-3M290.86 127.70v6.00M301.99 84.60v3M301.99 176.80v-3M301.99 127.70v6.00M313.12 84.60v3M313.12 176.80v-3M313.12 127.70v6.00M324.25 84.60v3M324.25 176.80v-3M324.25 127.70v6.00M335.38 84.60v3M335.38 176.80v-3M335.38 127.70v6.00M346.51 84.60v3M346.51 176.80v-3M346.51 127.70v6.00M357.64 84.60v3M357.64 176.80v-3M357.64 127.70v6.00M368.77 84.60v3M368.77 176.80v-3M368.77 127.70v6.00M379.90 84.60v3M379.90 176.80v-3M379.90 127.70v6.00M391.03 84.60v3M391.03 176.80v-3M391.03 127.70v6.00M402.16 84.60v3M402.16 176.80v-3M402.16 127.70v6.00M413.29 84.60v3M413.29 176.80v-3M413.29 127.70v6.00M424.42 84.60v3M424.42 176.80v-3M424.42 127.70v6.00M435.55 84.60v3M435.55 176.80v-3M435.55 127.70v6.00M446.68 84.60v3M446.68 176.80v-3M446.68 127.70v6.00M457.81 84.60v3M457.81 176.80v-3M457.81 127.70v6.00M468.94 84.60v3M468.94 176.80v-3M468.94 127.70v6.00M480.07 84.60v3M480.07 176.80v-3M480.07 127.70v6.00M491.20 84.60v3M491.20 176.80v-3M491.20 127.70v6.00M502.33 84.60v3M502.33 176.80v-3M502.33 127.70v6.00M513.46 84.60v3M513.46 176.80v-3M513.46 127.70v6.00M524.59 84.60v3M524.59 176.80v-3M524.59 127.70v6.00M535.72 84.60v3M535.72 176.80v-3M535.72 127.70v6.00M546.85 84.60v3M546.85 176.80v-3M546.85 127.70v6.00M557.98 84.60v3M557.98 176.80v-3M557.98 127.70v6.00M569.11 84.60v3M569.11 176.80v-3M569.11 127.70v6.00M580.24 84.60v3M580.24 176.80v-3M580.24 127.70v6.00M591.37 84.60v3M591.37 176.80v-3M591.37 127.70v6.00" stroke="#a09878" stroke-width="1.3" fill="none"/><path d="M588.6 143.2 L593.2 139 V147.4 Z" fill="#5cc03c"/><g fill="#a09878"><rect x="56.53" y="227.53" width="1.2" height="1.2"/><rect x="67.66" y="227.53" width="1.2" height="1.2"/><rect x="78.79" y="227.53" width="1.2" height="1.2"/><rect x="89.92" y="227.53" width="1.2" height="1.2"/><rect x="101.05" y="227.53" width="1.2" height="1.2"/><rect x="112.18" y="227.53" width="1.2" height="1.2"/><rect x="123.31" y="227.53" width="1.2" height="1.2"/><rect x="134.44" y="227.53" width="1.2" height="1.2"/><rect x="145.57" y="227.53" width="1.2" height="1.2"/><rect x="156.70" y="227.53" width="1.2" height="1.2"/><rect x="167.83" y="227.53" width="1.2" height="1.2"/><rect x="178.96" y="227.53" width="1.2" height="1.2"/><rect x="190.09" y="227.53" width="1.2" height="1.2"/><rect x="201.22" y="227.53" width="1.2" height="1.2"/><rect x="212.35" y="227.53" width="1.2" height="1.2"/><rect x="223.48" y="227.53" width="1.2" height="1.2"/><rect x="234.61" y="227.53" width="1.2" height="1.2"/><rect x="245.74" y="227.53" width="1.2" height="1.2"/><rect x="256.87" y="227.53" width="1.2" height="1.2"/><rect x="268.00" y="227.53" width="1.2" height="1.2"/><rect x="279.13" y="227.53" width="1.2" height="1.2"/><rect x="290.26" y="227.53" width="1.2" height="1.2"/><rect x="301.39" y="227.53" width="1.2" height="1.2"/><rect x="312.52" y="227.53" width="1.2" height="1.2"/><rect x="323.65" y="227.53" width="1.2" height="1.2"/><rect x="334.78" y="227.53" width="1.2" height="1.2"/><rect x="345.91" y="227.53" width="1.2" height="1.2"/><rect x="357.04" y="227.53" width="1.2" height="1.2"/><rect x="368.17" y="227.53" width="1.2" height="1.2"/><rect x="379.30" y="227.53" width="1.2" height="1.2"/><rect x="390.43" y="227.53" width="1.2" height="1.2"/><rect x="401.56" y="227.53" width="1.2" height="1.2"/><rect x="412.69" y="227.53" width="1.2" height="1.2"/><rect x="423.82" y="227.53" width="1.2" height="1.2"/><rect x="434.95" y="227.53" width="1.2" height="1.2"/><rect x="446.08" y="227.53" width="1.2" height="1.2"/><rect x="457.21" y="227.53" width="1.2" height="1.2"/><rect x="468.34" y="227.53" width="1.2" height="1.2"/><rect x="479.47" y="227.53" width="1.2" height="1.2"/><rect x="490.60" y="227.53" width="1.2" height="1.2"/><rect x="501.73" y="227.53" width="1.2" height="1.2"/><rect x="512.86" y="227.53" width="1.2" height="1.2"/><rect x="523.99" y="227.53" width="1.2" height="1.2"/><rect x="535.12" y="227.53" width="1.2" height="1.2"/><rect x="546.25" y="227.53" width="1.2" height="1.2"/><rect x="557.38" y="227.53" width="1.2" height="1.2"/><rect x="568.51" y="227.53" width="1.2" height="1.2"/><rect x="579.64" y="227.53" width="1.2" height="1.2"/><rect x="590.77" y="227.53" width="1.2" height="1.2"/><rect x="56.53" y="273.65" width="1.2" height="1.2"/><rect x="67.66" y="273.65" width="1.2" height="1.2"/><rect x="78.79" y="273.65" width="1.2" height="1.2"/><rect x="89.92" y="273.65" width="1.2" height="1.2"/><rect x="101.05" y="273.65" width="1.2" height="1.2"/><rect x="112.18" y="273.65" width="1.2" height="1.2"/><rect x="123.31" y="273.65" width="1.2" height="1.2"/><rect x="134.44" y="273.65" width="1.2" height="1.2"/><rect x="145.57" y="273.65" width="1.2" height="1.2"/><rect x="156.70" y="273.65" width="1.2" height="1.2"/><rect x="167.83" y="273.65" width="1.2" height="1.2"/><rect x="178.96" y="273.65" width="1.2" height="1.2"/><rect x="190.09" y="273.65" width="1.2" height="1.2"/><rect x="201.22" y="273.65" width="1.2" height="1.2"/><rect x="212.35" y="273.65" width="1.2" height="1.2"/><rect x="223.48" y="273.65" width="1.2" height="1.2"/><rect x="234.61" y="273.65" width="1.2" height="1.2"/><rect x="245.74" y="273.65" width="1.2" height="1.2"/><rect x="256.87" y="273.65" width="1.2" height="1.2"/><rect x="268.00" y="273.65" width="1.2" height="1.2"/><rect x="279.13" y="273.65" width="1.2" height="1.2"/><rect x="290.26" y="273.65" width="1.2" height="1.2"/><rect x="301.39" y="273.65" width="1.2" height="1.2"/><rect x="312.52" y="273.65" width="1.2" height="1.2"/><rect x="323.65" y="273.65" width="1.2" height="1.2"/><rect x="334.78" y="273.65" width="1.2" height="1.2"/><rect x="345.91" y="273.65" width="1.2" height="1.2"/><rect x="357.04" y="273.65" width="1.2" height="1.2"/><rect x="368.17" y="273.65" width="1.2" height="1.2"/><rect x="379.30" y="273.65" width="1.2" height="1.2"/><rect x="390.43" y="273.65" width="1.2" height="1.2"/><rect x="401.56" y="273.65" width="1.2" height="1.2"/><rect x="412.69" y="273.65" width="1.2" height="1.2"/><rect x="423.82" y="273.65" width="1.2" height="1.2"/><rect x="434.95" y="273.65" width="1.2" height="1.2"/><rect x="446.08" y="273.65" width="1.2" height="1.2"/><rect x="457.21" y="273.65" width="1.2" height="1.2"/><rect x="468.34" y="273.65" width="1.2" height="1.2"/><rect x="479.47" y="273.65" width="1.2" height="1.2"/><rect x="490.60" y="273.65" width="1.2" height="1.2"/><rect x="501.73" y="273.65" width="1.2" height="1.2"/><rect x="512.86" y="273.65" width="1.2" height="1.2"/><rect x="523.99" y="273.65" width="1.2" height="1.2"/><rect x="535.12" y="273.65" width="1.2" height="1.2"/><rect x="546.25" y="273.65" width="1.2" height="1.2"/><rect x="557.38" y="273.65" width="1.2" height="1.2"/><rect x="568.51" y="273.65" width="1.2" height="1.2"/><rect x="579.64" y="273.65" width="1.2" height="1.2"/><rect x="590.77" y="273.65" width="1.2" height="1.2"/><rect x="56.53" y="319.77" width="1.2" height="1.2"/><rect x="67.66" y="319.77" width="1.2" height="1.2"/><rect x="78.79" y="319.77" width="1.2" height="1.2"/><rect x="89.92" y="319.77" width="1.2" height="1.2"/><rect x="101.05" y="319.77" width="1.2" height="1.2"/><rect x="112.18" y="319.77" width="1.2" height="1.2"/><rect x="123.31" y="319.77" width="1.2" height="1.2"/><rect x="134.44" y="319.77" width="1.2" height="1.2"/><rect x="145.57" y="319.77" width="1.2" height="1.2"/><rect x="156.70" y="319.77" width="1.2" height="1.2"/><rect x="167.83" y="319.77" width="1.2" height="1.2"/><rect x="178.96" y="319.77" width="1.2" height="1.2"/><rect x="190.09" y="319.77" width="1.2" height="1.2"/><rect x="201.22" y="319.77" width="1.2" height="1.2"/><rect x="212.35" y="319.77" width="1.2" height="1.2"/><rect x="223.48" y="319.77" width="1.2" height="1.2"/><rect x="234.61" y="319.77" width="1.2" height="1.2"/><rect x="245.74" y="319.77" width="1.2" height="1.2"/><rect x="256.87" y="319.77" width="1.2" height="1.2"/><rect x="268.00" y="319.77" width="1.2" height="1.2"/><rect x="279.13" y="319.77" width="1.2" height="1.2"/><rect x="290.26" y="319.77" width="1.2" height="1.2"/><rect x="301.39" y="319.77" width="1.2" height="1.2"/><rect x="312.52" y="319.77" width="1.2" height="1.2"/><rect x="323.65" y="319.77" width="1.2" height="1.2"/><rect x="334.78" y="319.77" width="1.2" height="1.2"/><rect x="345.91" y="319.77" width="1.2" height="1.2"/><rect x="357.04" y="319.77" width="1.2" height="1.2"/><rect x="368.17" y="319.77" width="1.2" height="1.2"/><rect x="379.30" y="319.77" width="1.2" height="1.2"/><rect x="390.43" y="319.77" width="1.2" height="1.2"/><rect x="401.56" y="319.77" width="1.2" height="1.2"/><rect x="412.69" y="319.77" width="1.2" height="1.2"/><rect x="423.82" y="319.77" width="1.2" height="1.2"/><rect x="434.95" y="319.77" width="1.2" height="1.2"/><rect x="446.08" y="319.77" width="1.2" height="1.2"/><rect x="457.21" y="319.77" width="1.2" height="1.2"/><rect x="468.34" y="319.77" width="1.2" height="1.2"/><rect x="479.47" y="319.77" width="1.2" height="1.2"/><rect x="490.60" y="319.77" width="1.2" height="1.2"/><rect x="501.73" y="319.77" width="1.2" height="1.2"/><rect x="512.86" y="319.77" width="1.2" height="1.2"/><rect x="523.99" y="319.77" width="1.2" height="1.2"/><rect x="535.12" y="319.77" width="1.2" height="1.2"/><rect x="546.25" y="319.77" width="1.2" height="1.2"/><rect x="557.38" y="319.77" width="1.2" height="1.2"/><rect x="568.51" y="319.77" width="1.2" height="1.2"/><rect x="579.64" y="319.77" width="1.2" height="1.2"/><rect x="590.77" y="319.77" width="1.2" height="1.2"/><rect x="56.53" y="412.02" width="1.2" height="1.2"/><rect x="67.66" y="412.02" width="1.2" height="1.2"/><rect x="78.79" y="412.02" width="1.2" height="1.2"/><rect x="89.92" y="412.02" width="1.2" height="1.2"/><rect x="101.05" y="412.02" width="1.2" height="1.2"/><rect x="112.18" y="412.02" width="1.2" height="1.2"/><rect x="123.31" y="412.02" width="1.2" height="1.2"/><rect x="134.44" y="412.02" width="1.2" height="1.2"/><rect x="145.57" y="412.02" width="1.2" height="1.2"/><rect x="156.70" y="412.02" width="1.2" height="1.2"/><rect x="167.83" y="412.02" width="1.2" height="1.2"/><rect x="178.96" y="412.02" width="1.2" height="1.2"/><rect x="190.09" y="412.02" width="1.2" height="1.2"/><rect x="201.22" y="412.02" width="1.2" height="1.2"/><rect x="212.35" y="412.02" width="1.2" height="1.2"/><rect x="223.48" y="412.02" width="1.2" height="1.2"/><rect x="234.61" y="412.02" width="1.2" height="1.2"/><rect x="245.74" y="412.02" width="1.2" height="1.2"/><rect x="256.87" y="412.02" width="1.2" height="1.2"/><rect x="268.00" y="412.02" width="1.2" height="1.2"/><rect x="279.13" y="412.02" width="1.2" height="1.2"/><rect x="290.26" y="412.02" width="1.2" height="1.2"/><rect x="301.39" y="412.02" width="1.2" height="1.2"/><rect x="312.52" y="412.02" width="1.2" height="1.2"/><rect x="323.65" y="412.02" width="1.2" height="1.2"/><rect x="334.78" y="412.02" width="1.2" height="1.2"/><rect x="345.91" y="412.02" width="1.2" height="1.2"/><rect x="357.04" y="412.02" width="1.2" height="1.2"/><rect x="368.17" y="412.02" width="1.2" height="1.2"/><rect x="379.30" y="412.02" width="1.2" height="1.2"/><rect x="390.43" y="412.02" width="1.2" height="1.2"/><rect x="401.56" y="412.02" width="1.2" height="1.2"/><rect x="412.69" y="412.02" width="1.2" height="1.2"/><rect x="423.82" y="412.02" width="1.2" height="1.2"/><rect x="434.95" y="412.02" width="1.2" height="1.2"/><rect x="446.08" y="412.02" width="1.2" height="1.2"/><rect x="457.21" y="412.02" width="1.2" height="1.2"/><rect x="468.34" y="412.02" width="1.2" height="1.2"/><rect x="479.47" y="412.02" width="1.2" height="1.2"/><rect x="490.60" y="412.02" width="1.2" height="1.2"/><rect x="501.73" y="412.02" width="1.2" height="1.2"/><rect x="512.86" y="412.02" width="1.2" height="1.2"/><rect x="523.99" y="412.02" width="1.2" height="1.2"/><rect x="535.12" y="412.02" width="1.2" height="1.2"/><rect x="546.25" y="412.02" width="1.2" height="1.2"/><rect x="557.38" y="412.02" width="1.2" height="1.2"/><rect x="568.51" y="412.02" width="1.2" height="1.2"/><rect x="579.64" y="412.02" width="1.2" height="1.2"/><rect x="590.77" y="412.02" width="1.2" height="1.2"/><rect x="56.53" y="458.15" width="1.2" height="1.2"/><rect x="67.66" y="458.15" width="1.2" height="1.2"/><rect x="78.79" y="458.15" width="1.2" height="1.2"/><rect x="89.92" y="458.15" width="1.2" height="1.2"/><rect x="101.05" y="458.15" width="1.2" height="1.2"/><rect x="112.18" y="458.15" width="1.2" height="1.2"/><rect x="123.31" y="458.15" width="1.2" height="1.2"/><rect x="134.44" y="458.15" width="1.2" height="1.2"/><rect x="145.57" y="458.15" width="1.2" height="1.2"/><rect x="156.70" y="458.15" width="1.2" height="1.2"/><rect x="167.83" y="458.15" width="1.2" height="1.2"/><rect x="178.96" y="458.15" width="1.2" height="1.2"/><rect x="190.09" y="458.15" width="1.2" height="1.2"/><rect x="201.22" y="458.15" width="1.2" height="1.2"/><rect x="212.35" y="458.15" width="1.2" height="1.2"/><rect x="223.48" y="458.15" width="1.2" height="1.2"/><rect x="234.61" y="458.15" width="1.2" height="1.2"/><rect x="245.74" y="458.15" width="1.2" height="1.2"/><rect x="256.87" y="458.15" width="1.2" height="1.2"/><rect x="268.00" y="458.15" width="1.2" height="1.2"/><rect x="279.13" y="458.15" width="1.2" height="1.2"/><rect x="290.26" y="458.15" width="1.2" height="1.2"/><rect x="301.39" y="458.15" width="1.2" height="1.2"/><rect x="312.52" y="458.15" width="1.2" height="1.2"/><rect x="323.65" y="458.15" width="1.2" height="1.2"/><rect x="334.78" y="458.15" width="1.2" height="1.2"/><rect x="345.91" y="458.15" width="1.2" height="1.2"/><rect x="357.04" y="458.15" width="1.2" height="1.2"/><rect x="368.17" y="458.15" width="1.2" height="1.2"/><rect x="379.30" y="458.15" width="1.2" height="1.2"/><rect x="390.43" y="458.15" width="1.2" height="1.2"/><rect x="401.56" y="458.15" width="1.2" height="1.2"/><rect x="412.69" y="458.15" width="1.2" height="1.2"/><rect x="423.82" y="458.15" width="1.2" height="1.2"/><rect x="434.95" y="458.15" width="1.2" height="1.2"/><rect x="446.08" y="458.15" width="1.2" height="1.2"/><rect x="457.21" y="458.15" width="1.2" height="1.2"/><rect x="468.34" y="458.15" width="1.2" height="1.2"/><rect x="479.47" y="458.15" width="1.2" height="1.2"/><rect x="490.60" y="458.15" width="1.2" height="1.2"/><rect x="501.73" y="458.15" width="1.2" height="1.2"/><rect x="512.86" y="458.15" width="1.2" height="1.2"/><rect x="523.99" y="458.15" width="1.2" height="1.2"/><rect x="535.12" y="458.15" width="1.2" height="1.2"/><rect x="546.25" y="458.15" width="1.2" height="1.2"/><rect x="557.38" y="458.15" width="1.2" height="1.2"/><rect x="568.51" y="458.15" width="1.2" height="1.2"/><rect x="579.64" y="458.15" width="1.2" height="1.2"/><rect x="590.77" y="458.15" width="1.2" height="1.2"/><rect x="56.53" y="504.27" width="1.2" height="1.2"/><rect x="67.66" y="504.27" width="1.2" height="1.2"/><rect x="78.79" y="504.27" width="1.2" height="1.2"/><rect x="89.92" y="504.27" width="1.2" height="1.2"/><rect x="101.05" y="504.27" width="1.2" height="1.2"/><rect x="112.18" y="504.27" width="1.2" height="1.2"/><rect x="123.31" y="504.27" width="1.2" height="1.2"/><rect x="134.44" y="504.27" width="1.2" height="1.2"/><rect x="145.57" y="504.27" width="1.2" height="1.2"/><rect x="156.70" y="504.27" width="1.2" height="1.2"/><rect x="167.83" y="504.27" width="1.2" height="1.2"/><rect x="178.96" y="504.27" width="1.2" height="1.2"/><rect x="190.09" y="504.27" width="1.2" height="1.2"/><rect x="201.22" y="504.27" width="1.2" height="1.2"/><rect x="212.35" y="504.27" width="1.2" height="1.2"/><rect x="223.48" y="504.27" width="1.2" height="1.2"/><rect x="234.61" y="504.27" width="1.2" height="1.2"/><rect x="245.74" y="504.27" width="1.2" height="1.2"/><rect x="256.87" y="504.27" width="1.2" height="1.2"/><rect x="268.00" y="504.27" width="1.2" height="1.2"/><rect x="279.13" y="504.27" width="1.2" height="1.2"/><rect x="290.26" y="504.27" width="1.2" height="1.2"/><rect x="301.39" y="504.27" width="1.2" height="1.2"/><rect x="312.52" y="504.27" width="1.2" height="1.2"/><rect x="323.65" y="504.27" width="1.2" height="1.2"/><rect x="334.78" y="504.27" width="1.2" height="1.2"/><rect x="345.91" y="504.27" width="1.2" height="1.2"/><rect x="357.04" y="504.27" width="1.2" height="1.2"/><rect x="368.17" y="504.27" width="1.2" height="1.2"/><rect x="379.30" y="504.27" width="1.2" height="1.2"/><rect x="390.43" y="504.27" width="1.2" height="1.2"/><rect x="401.56" y="504.27" width="1.2" height="1.2"/><rect x="412.69" y="504.27" width="1.2" height="1.2"/><rect x="423.82" y="504.27" width="1.2" height="1.2"/><rect x="434.95" y="504.27" width="1.2" height="1.2"/><rect x="446.08" y="504.27" width="1.2" height="1.2"/><rect x="457.21" y="504.27" width="1.2" height="1.2"/><rect x="468.34" y="504.27" width="1.2" height="1.2"/><rect x="479.47" y="504.27" width="1.2" height="1.2"/><rect x="490.60" y="504.27" width="1.2" height="1.2"/><rect x="501.73" y="504.27" width="1.2" height="1.2"/><rect x="512.86" y="504.27" width="1.2" height="1.2"/><rect x="523.99" y="504.27" width="1.2" height="1.2"/><rect x="535.12" y="504.27" width="1.2" height="1.2"/><rect x="546.25" y="504.27" width="1.2" height="1.2"/><rect x="557.38" y="504.27" width="1.2" height="1.2"/><rect x="568.51" y="504.27" width="1.2" height="1.2"/><rect x="579.64" y="504.27" width="1.2" height="1.2"/><rect x="590.77" y="504.27" width="1.2" height="1.2"/><rect x="101.05" y="190.62" width="1.2" height="1.2"/><rect x="101.05" y="199.85" width="1.2" height="1.2"/><rect x="101.05" y="209.08" width="1.2" height="1.2"/><rect x="101.05" y="218.30" width="1.2" height="1.2"/><rect x="101.05" y="227.53" width="1.2" height="1.2"/><rect x="101.05" y="236.75" width="1.2" height="1.2"/><rect x="101.05" y="245.97" width="1.2" height="1.2"/><rect x="101.05" y="255.20" width="1.2" height="1.2"/><rect x="101.05" y="264.42" width="1.2" height="1.2"/><rect x="101.05" y="273.65" width="1.2" height="1.2"/><rect x="101.05" y="282.88" width="1.2" height="1.2"/><rect x="101.05" y="292.10" width="1.2" height="1.2"/><rect x="101.05" y="301.32" width="1.2" height="1.2"/><rect x="101.05" y="310.55" width="1.2" height="1.2"/><rect x="101.05" y="319.77" width="1.2" height="1.2"/><rect x="101.05" y="329.00" width="1.2" height="1.2"/><rect x="101.05" y="338.22" width="1.2" height="1.2"/><rect x="101.05" y="347.45" width="1.2" height="1.2"/><rect x="101.05" y="356.67" width="1.2" height="1.2"/><rect x="101.05" y="365.90" width="1.2" height="1.2"/><rect x="101.05" y="375.12" width="1.2" height="1.2"/><rect x="101.05" y="384.35" width="1.2" height="1.2"/><rect x="101.05" y="393.57" width="1.2" height="1.2"/><rect x="101.05" y="402.80" width="1.2" height="1.2"/><rect x="101.05" y="412.02" width="1.2" height="1.2"/><rect x="101.05" y="421.25" width="1.2" height="1.2"/><rect x="101.05" y="430.47" width="1.2" height="1.2"/><rect x="101.05" y="439.70" width="1.2" height="1.2"/><rect x="101.05" y="448.92" width="1.2" height="1.2"/><rect x="101.05" y="458.15" width="1.2" height="1.2"/><rect x="101.05" y="467.37" width="1.2" height="1.2"/><rect x="101.05" y="476.60" width="1.2" height="1.2"/><rect x="101.05" y="485.82" width="1.2" height="1.2"/><rect x="101.05" y="495.05" width="1.2" height="1.2"/><rect x="101.05" y="504.27" width="1.2" height="1.2"/><rect x="101.05" y="513.50" width="1.2" height="1.2"/><rect x="101.05" y="522.73" width="1.2" height="1.2"/><rect x="101.05" y="531.95" width="1.2" height="1.2"/><rect x="101.05" y="541.17" width="1.2" height="1.2"/><rect x="156.70" y="190.62" width="1.2" height="1.2"/><rect x="156.70" y="199.85" width="1.2" height="1.2"/><rect x="156.70" y="209.08" width="1.2" height="1.2"/><rect x="156.70" y="218.30" width="1.2" height="1.2"/><rect x="156.70" y="227.53" width="1.2" height="1.2"/><rect x="156.70" y="236.75" width="1.2" height="1.2"/><rect x="156.70" y="245.97" width="1.2" height="1.2"/><rect x="156.70" y="255.20" width="1.2" height="1.2"/><rect x="156.70" y="264.42" width="1.2" height="1.2"/><rect x="156.70" y="273.65" width="1.2" height="1.2"/><rect x="156.70" y="282.88" width="1.2" height="1.2"/><rect x="156.70" y="292.10" width="1.2" height="1.2"/><rect x="156.70" y="301.32" width="1.2" height="1.2"/><rect x="156.70" y="310.55" width="1.2" height="1.2"/><rect x="156.70" y="319.77" width="1.2" height="1.2"/><rect x="156.70" y="329.00" width="1.2" height="1.2"/><rect x="156.70" y="338.22" width="1.2" height="1.2"/><rect x="156.70" y="347.45" width="1.2" height="1.2"/><rect x="156.70" y="356.67" width="1.2" height="1.2"/><rect x="156.70" y="365.90" width="1.2" height="1.2"/><rect x="156.70" y="375.12" width="1.2" height="1.2"/><rect x="156.70" y="384.35" width="1.2" height="1.2"/><rect x="156.70" y="393.57" width="1.2" height="1.2"/><rect x="156.70" y="402.80" width="1.2" height="1.2"/><rect x="156.70" y="412.02" width="1.2" height="1.2"/><rect x="156.70" y="421.25" width="1.2" height="1.2"/><rect x="156.70" y="430.47" width="1.2" height="1.2"/><rect x="156.70" y="439.70" width="1.2" height="1.2"/><rect x="156.70" y="448.92" width="1.2" height="1.2"/><rect x="156.70" y="458.15" width="1.2" height="1.2"/><rect x="156.70" y="467.37" width="1.2" height="1.2"/><rect x="156.70" y="476.60" width="1.2" height="1.2"/><rect x="156.70" y="485.82" width="1.2" height="1.2"/><rect x="156.70" y="495.05" width="1.2" height="1.2"/><rect x="156.70" y="504.27" width="1.2" height="1.2"/><rect x="156.70" y="513.50" width="1.2" height="1.2"/><rect x="156.70" y="522.73" width="1.2" height="1.2"/><rect x="156.70" y="531.95" width="1.2" height="1.2"/><rect x="156.70" y="541.17" width="1.2" height="1.2"/><rect x="212.35" y="190.62" width="1.2" height="1.2"/><rect x="212.35" y="199.85" width="1.2" height="1.2"/><rect x="212.35" y="209.08" width="1.2" height="1.2"/><rect x="212.35" y="218.30" width="1.2" height="1.2"/><rect x="212.35" y="227.53" width="1.2" height="1.2"/><rect x="212.35" y="236.75" width="1.2" height="1.2"/><rect x="212.35" y="245.97" width="1.2" height="1.2"/><rect x="212.35" y="255.20" width="1.2" height="1.2"/><rect x="212.35" y="264.42" width="1.2" height="1.2"/><rect x="212.35" y="273.65" width="1.2" height="1.2"/><rect x="212.35" y="282.88" width="1.2" height="1.2"/><rect x="212.35" y="292.10" width="1.2" height="1.2"/><rect x="212.35" y="301.32" width="1.2" height="1.2"/><rect x="212.35" y="310.55" width="1.2" height="1.2"/><rect x="212.35" y="319.77" width="1.2" height="1.2"/><rect x="212.35" y="329.00" width="1.2" height="1.2"/><rect x="212.35" y="338.22" width="1.2" height="1.2"/><rect x="212.35" y="347.45" width="1.2" height="1.2"/><rect x="212.35" y="356.67" width="1.2" height="1.2"/><rect x="212.35" y="365.90" width="1.2" height="1.2"/><rect x="212.35" y="375.12" width="1.2" height="1.2"/><rect x="212.35" y="384.35" width="1.2" height="1.2"/><rect x="212.35" y="393.57" width="1.2" height="1.2"/><rect x="212.35" y="402.80" width="1.2" height="1.2"/><rect x="212.35" y="412.02" width="1.2" height="1.2"/><rect x="212.35" y="421.25" width="1.2" height="1.2"/><rect x="212.35" y="430.47" width="1.2" height="1.2"/><rect x="212.35" y="439.70" width="1.2" height="1.2"/><rect x="212.35" y="448.92" width="1.2" height="1.2"/><rect x="212.35" y="458.15" width="1.2" height="1.2"/><rect x="212.35" y="467.37" width="1.2" height="1.2"/><rect x="212.35" y="476.60" width="1.2" height="1.2"/><rect x="212.35" y="485.82" width="1.2" height="1.2"/><rect x="212.35" y="495.05" width="1.2" height="1.2"/><rect x="212.35" y="504.27" width="1.2" height="1.2"/><rect x="212.35" y="513.50" width="1.2" height="1.2"/><rect x="212.35" y="522.73" width="1.2" height="1.2"/><rect x="212.35" y="531.95" width="1.2" height="1.2"/><rect x="212.35" y="541.17" width="1.2" height="1.2"/><rect x="268.00" y="190.62" width="1.2" height="1.2"/><rect x="268.00" y="199.85" width="1.2" height="1.2"/><rect x="268.00" y="209.08" width="1.2" height="1.2"/><rect x="268.00" y="218.30" width="1.2" height="1.2"/><rect x="268.00" y="227.53" width="1.2" height="1.2"/><rect x="268.00" y="236.75" width="1.2" height="1.2"/><rect x="268.00" y="245.97" width="1.2" height="1.2"/><rect x="268.00" y="255.20" width="1.2" height="1.2"/><rect x="268.00" y="264.42" width="1.2" height="1.2"/><rect x="268.00" y="273.65" width="1.2" height="1.2"/><rect x="268.00" y="282.88" width="1.2" height="1.2"/><rect x="268.00" y="292.10" width="1.2" height="1.2"/><rect x="268.00" y="301.32" width="1.2" height="1.2"/><rect x="268.00" y="310.55" width="1.2" height="1.2"/><rect x="268.00" y="319.77" width="1.2" height="1.2"/><rect x="268.00" y="329.00" width="1.2" height="1.2"/><rect x="268.00" y="338.22" width="1.2" height="1.2"/><rect x="268.00" y="347.45" width="1.2" height="1.2"/><rect x="268.00" y="356.67" width="1.2" height="1.2"/><rect x="268.00" y="365.90" width="1.2" height="1.2"/><rect x="268.00" y="375.12" width="1.2" height="1.2"/><rect x="268.00" y="384.35" width="1.2" height="1.2"/><rect x="268.00" y="393.57" width="1.2" height="1.2"/><rect x="268.00" y="402.80" width="1.2" height="1.2"/><rect x="268.00" y="412.02" width="1.2" height="1.2"/><rect x="268.00" y="421.25" width="1.2" height="1.2"/><rect x="268.00" y="430.47" width="1.2" height="1.2"/><rect x="268.00" y="439.70" width="1.2" height="1.2"/><rect x="268.00" y="448.92" width="1.2" height="1.2"/><rect x="268.00" y="458.15" width="1.2" height="1.2"/><rect x="268.00" y="467.37" width="1.2" height="1.2"/><rect x="268.00" y="476.60" width="1.2" height="1.2"/><rect x="268.00" y="485.82" width="1.2" height="1.2"/><rect x="268.00" y="495.05" width="1.2" height="1.2"/><rect x="268.00" y="504.27" width="1.2" height="1.2"/><rect x="268.00" y="513.50" width="1.2" height="1.2"/><rect x="268.00" y="522.73" width="1.2" height="1.2"/><rect x="268.00" y="531.95" width="1.2" height="1.2"/><rect x="268.00" y="541.17" width="1.2" height="1.2"/><rect x="379.30" y="190.62" width="1.2" height="1.2"/><rect x="379.30" y="199.85" width="1.2" height="1.2"/><rect x="379.30" y="209.08" width="1.2" height="1.2"/><rect x="379.30" y="218.30" width="1.2" height="1.2"/><rect x="379.30" y="227.53" width="1.2" height="1.2"/><rect x="379.30" y="236.75" width="1.2" height="1.2"/><rect x="379.30" y="245.97" width="1.2" height="1.2"/><rect x="379.30" y="255.20" width="1.2" height="1.2"/><rect x="379.30" y="264.42" width="1.2" height="1.2"/><rect x="379.30" y="273.65" width="1.2" height="1.2"/><rect x="379.30" y="282.88" width="1.2" height="1.2"/><rect x="379.30" y="292.10" width="1.2" height="1.2"/><rect x="379.30" y="301.32" width="1.2" height="1.2"/><rect x="379.30" y="310.55" width="1.2" height="1.2"/><rect x="379.30" y="319.77" width="1.2" height="1.2"/><rect x="379.30" y="329.00" width="1.2" height="1.2"/><rect x="379.30" y="338.22" width="1.2" height="1.2"/><rect x="379.30" y="347.45" width="1.2" height="1.2"/><rect x="379.30" y="356.67" width="1.2" height="1.2"/><rect x="379.30" y="365.90" width="1.2" height="1.2"/><rect x="379.30" y="375.12" width="1.2" height="1.2"/><rect x="379.30" y="384.35" width="1.2" height="1.2"/><rect x="379.30" y="393.57" width="1.2" height="1.2"/><rect x="379.30" y="402.80" width="1.2" height="1.2"/><rect x="379.30" y="412.02" width="1.2" height="1.2"/><rect x="379.30" y="421.25" width="1.2" height="1.2"/><rect x="379.30" y="430.47" width="1.2" height="1.2"/><rect x="379.30" y="439.70" width="1.2" height="1.2"/><rect x="379.30" y="448.92" width="1.2" height="1.2"/><rect x="379.30" y="458.15" width="1.2" height="1.2"/><rect x="379.30" y="467.37" width="1.2" height="1.2"/><rect x="379.30" y="476.60" width="1.2" height="1.2"/><rect x="379.30" y="485.82" width="1.2" height="1.2"/><rect x="379.30" y="495.05" width="1.2" height="1.2"/><rect x="379.30" y="504.27" width="1.2" height="1.2"/><rect x="379.30" y="513.50" width="1.2" height="1.2"/><rect x="379.30" y="522.73" width="1.2" height="1.2"/><rect x="379.30" y="531.95" width="1.2" height="1.2"/><rect x="379.30" y="541.17" width="1.2" height="1.2"/><rect x="434.95" y="190.62" width="1.2" height="1.2"/><rect x="434.95" y="199.85" width="1.2" height="1.2"/><rect x="434.95" y="209.08" width="1.2" height="1.2"/><rect x="434.95" y="218.30" width="1.2" height="1.2"/><rect x="434.95" y="227.53" width="1.2" height="1.2"/><rect x="434.95" y="236.75" width="1.2" height="1.2"/><rect x="434.95" y="245.97" width="1.2" height="1.2"/><rect x="434.95" y="255.20" width="1.2" height="1.2"/><rect x="434.95" y="264.42" width="1.2" height="1.2"/><rect x="434.95" y="273.65" width="1.2" height="1.2"/><rect x="434.95" y="282.88" width="1.2" height="1.2"/><rect x="434.95" y="292.10" width="1.2" height="1.2"/><rect x="434.95" y="301.32" width="1.2" height="1.2"/><rect x="434.95" y="310.55" width="1.2" height="1.2"/><rect x="434.95" y="319.77" width="1.2" height="1.2"/><rect x="434.95" y="329.00" width="1.2" height="1.2"/><rect x="434.95" y="338.22" width="1.2" height="1.2"/><rect x="434.95" y="347.45" width="1.2" height="1.2"/><rect x="434.95" y="356.67" width="1.2" height="1.2"/><rect x="434.95" y="365.90" width="1.2" height="1.2"/><rect x="434.95" y="375.12" width="1.2" height="1.2"/><rect x="434.95" y="384.35" width="1.2" height="1.2"/><rect x="434.95" y="393.57" width="1.2" height="1.2"/><rect x="434.95" y="402.80" width="1.2" height="1.2"/><rect x="434.95" y="412.02" width="1.2" height="1.2"/><rect x="434.95" y="421.25" width="1.2" height="1.2"/><rect x="434.95" y="430.47" width="1.2" height="1.2"/><rect x="434.95" y="439.70" width="1.2" height="1.2"/><rect x="434.95" y="448.92" width="1.2" height="1.2"/><rect x="434.95" y="458.15" width="1.2" height="1.2"/><rect x="434.95" y="467.37" width="1.2" height="1.2"/><rect x="434.95" y="476.60" width="1.2" height="1.2"/><rect x="434.95" y="485.82" width="1.2" height="1.2"/><rect x="434.95" y="495.05" width="1.2" height="1.2"/><rect x="434.95" y="504.27" width="1.2" height="1.2"/><rect x="434.95" y="513.50" width="1.2" height="1.2"/><rect x="434.95" y="522.73" width="1.2" height="1.2"/><rect x="434.95" y="531.95" width="1.2" height="1.2"/><rect x="434.95" y="541.17" width="1.2" height="1.2"/><rect x="490.60" y="190.62" width="1.2" height="1.2"/><rect x="490.60" y="199.85" width="1.2" height="1.2"/><rect x="490.60" y="209.08" width="1.2" height="1.2"/><rect x="490.60" y="218.30" width="1.2" height="1.2"/><rect x="490.60" y="227.53" width="1.2" height="1.2"/><rect x="490.60" y="236.75" width="1.2" height="1.2"/><rect x="490.60" y="245.97" width="1.2" height="1.2"/><rect x="490.60" y="255.20" width="1.2" height="1.2"/><rect x="490.60" y="264.42" width="1.2" height="1.2"/><rect x="490.60" y="273.65" width="1.2" height="1.2"/><rect x="490.60" y="282.88" width="1.2" height="1.2"/><rect x="490.60" y="292.10" width="1.2" height="1.2"/><rect x="490.60" y="301.32" width="1.2" height="1.2"/><rect x="490.60" y="310.55" width="1.2" height="1.2"/><rect x="490.60" y="319.77" width="1.2" height="1.2"/><rect x="490.60" y="329.00" width="1.2" height="1.2"/><rect x="490.60" y="338.22" width="1.2" height="1.2"/><rect x="490.60" y="347.45" width="1.2" height="1.2"/><rect x="490.60" y="356.67" width="1.2" height="1.2"/><rect x="490.60" y="365.90" width="1.2" height="1.2"/><rect x="490.60" y="375.12" width="1.2" height="1.2"/><rect x="490.60" y="384.35" width="1.2" height="1.2"/><rect x="490.60" y="393.57" width="1.2" height="1.2"/><rect x="490.60" y="402.80" width="1.2" height="1.2"/><rect x="490.60" y="412.02" width="1.2" height="1.2"/><rect x="490.60" y="421.25" width="1.2" height="1.2"/><rect x="490.60" y="430.47" width="1.2" height="1.2"/><rect x="490.60" y="439.70" width="1.2" height="1.2"/><rect x="490.60" y="448.92" width="1.2" height="1.2"/><rect x="490.60" y="458.15" width="1.2" height="1.2"/><rect x="490.60" y="467.37" width="1.2" height="1.2"/><rect x="490.60" y="476.60" width="1.2" height="1.2"/><rect x="490.60" y="485.82" width="1.2" height="1.2"/><rect x="490.60" y="495.05" width="1.2" height="1.2"/><rect x="490.60" y="504.27" width="1.2" height="1.2"/><rect x="490.60" y="513.50" width="1.2" height="1.2"/><rect x="490.60" y="522.73" width="1.2" height="1.2"/><rect x="490.60" y="531.95" width="1.2" height="1.2"/><rect x="490.60" y="541.17" width="1.2" height="1.2"/><rect x="546.25" y="190.62" width="1.2" height="1.2"/><rect x="546.25" y="199.85" width="1.2" height="1.2"/><rect x="546.25" y="209.08" width="1.2" height="1.2"/><rect x="546.25" y="218.30" width="1.2" height="1.2"/><rect x="546.25" y="227.53" width="1.2" height="1.2"/><rect x="546.25" y="236.75" width="1.2" height="1.2"/><rect x="546.25" y="245.97" width="1.2" height="1.2"/><rect x="546.25" y="255.20" width="1.2" height="1.2"/><rect x="546.25" y="264.42" width="1.2" height="1.2"/><rect x="546.25" y="273.65" width="1.2" height="1.2"/><rect x="546.25" y="282.88" width="1.2" height="1.2"/><rect x="546.25" y="292.10" width="1.2" height="1.2"/><rect x="546.25" y="301.32" width="1.2" height="1.2"/><rect x="546.25" y="310.55" width="1.2" height="1.2"/><rect x="546.25" y="319.77" width="1.2" height="1.2"/><rect x="546.25" y="329.00" width="1.2" height="1.2"/><rect x="546.25" y="338.22" width="1.2" height="1.2"/><rect x="546.25" y="347.45" width="1.2" height="1.2"/><rect x="546.25" y="356.67" width="1.2" height="1.2"/><rect x="546.25" y="365.90" width="1.2" height="1.2"/><rect x="546.25" y="375.12" width="1.2" height="1.2"/><rect x="546.25" y="384.35" width="1.2" height="1.2"/><rect x="546.25" y="393.57" width="1.2" height="1.2"/><rect x="546.25" y="402.80" width="1.2" height="1.2"/><rect x="546.25" y="412.02" width="1.2" height="1.2"/><rect x="546.25" y="421.25" width="1.2" height="1.2"/><rect x="546.25" y="430.47" width="1.2" height="1.2"/><rect x="546.25" y="439.70" width="1.2" height="1.2"/><rect x="546.25" y="448.92" width="1.2" height="1.2"/><rect x="546.25" y="458.15" width="1.2" height="1.2"/><rect x="546.25" y="467.37" width="1.2" height="1.2"/><rect x="546.25" y="476.60" width="1.2" height="1.2"/><rect x="546.25" y="485.82" width="1.2" height="1.2"/><rect x="546.25" y="495.05" width="1.2" height="1.2"/><rect x="546.25" y="504.27" width="1.2" height="1.2"/><rect x="546.25" y="513.50" width="1.2" height="1.2"/><rect x="546.25" y="522.73" width="1.2" height="1.2"/><rect x="546.25" y="531.95" width="1.2" height="1.2"/><rect x="546.25" y="541.17" width="1.2" height="1.2"/></g><rect x="46.00" y="182.00" width="556.50" height="369.00" fill="none" stroke="#a09878" stroke-width="1.35"/><line x1="324.25" y1="182.00" x2="324.25" y2="551.00" stroke="#a09878" stroke-width="1.3"/><line x1="46.00" y1="366.50" x2="602.50" y2="366.50" stroke="#a09878" stroke-width="1.3"/><path d="M46.00 191.22h5M602.50 191.22h-5M319.25 191.22h10M46.00 200.45h5M602.50 200.45h-5M319.25 200.45h10M46.00 209.68h5M602.50 209.68h-5M319.25 209.68h10M46.00 218.90h5M602.50 218.90h-5M319.25 218.90h10M46.00 228.12h11M602.50 228.12h-11M319.25 228.12h10M46.00 237.35h5M602.50 237.35h-5M319.25 237.35h10M46.00 246.57h5M602.50 246.57h-5M319.25 246.57h10M46.00 255.80h5M602.50 255.80h-5M319.25 255.80h10M46.00 265.02h5M602.50 265.02h-5M319.25 265.02h10M46.00 274.25h11M602.50 274.25h-11M319.25 274.25h10M46.00 283.48h5M602.50 283.48h-5M319.25 283.48h10M46.00 292.70h5M602.50 292.70h-5M319.25 292.70h10M46.00 301.93h5M602.50 301.93h-5M319.25 301.93h10M46.00 311.15h5M602.50 311.15h-5M319.25 311.15h10M46.00 320.38h11M602.50 320.38h-11M319.25 320.38h10M46.00 329.60h5M602.50 329.60h-5M319.25 329.60h10M46.00 338.82h5M602.50 338.82h-5M319.25 338.82h10M46.00 348.05h5M602.50 348.05h-5M319.25 348.05h10M46.00 357.27h5M602.50 357.27h-5M319.25 357.27h10M46.00 366.50h11M602.50 366.50h-11M319.25 366.50h10M46.00 375.73h5M602.50 375.73h-5M319.25 375.73h10M46.00 384.95h5M602.50 384.95h-5M319.25 384.95h10M46.00 394.17h5M602.50 394.17h-5M319.25 394.17h10M46.00 403.40h5M602.50 403.40h-5M319.25 403.40h10M46.00 412.62h11M602.50 412.62h-11M319.25 412.62h10M46.00 421.85h5M602.50 421.85h-5M319.25 421.85h10M46.00 431.07h5M602.50 431.07h-5M319.25 431.07h10M46.00 440.30h5M602.50 440.30h-5M319.25 440.30h10M46.00 449.52h5M602.50 449.52h-5M319.25 449.52h10M46.00 458.75h11M602.50 458.75h-11M319.25 458.75h10M46.00 467.97h5M602.50 467.97h-5M319.25 467.97h10M46.00 477.20h5M602.50 477.20h-5M319.25 477.20h10M46.00 486.43h5M602.50 486.43h-5M319.25 486.43h10M46.00 495.65h5M602.50 495.65h-5M319.25 495.65h10M46.00 504.88h11M602.50 504.88h-11M319.25 504.88h10M46.00 514.10h5M602.50 514.10h-5M319.25 514.10h10M46.00 523.33h5M602.50 523.33h-5M319.25 523.33h10M46.00 532.55h5M602.50 532.55h-5M319.25 532.55h10M46.00 541.77h5M602.50 541.77h-5M319.25 541.77h10M57.13 182.00v4M57.13 551.00v-4M57.13 362.20v8.60M68.26 182.00v4M68.26 551.00v-4M68.26 362.20v8.60M79.39 182.00v4M79.39 551.00v-4M79.39 362.20v8.60M90.52 182.00v4M90.52 551.00v-4M90.52 362.20v8.60M101.65 182.00v9M101.65 551.00v-9M101.65 358.90v15.20M112.78 182.00v4M112.78 551.00v-4M112.78 362.20v8.60M123.91 182.00v4M123.91 551.00v-4M123.91 362.20v8.60M135.04 182.00v4M135.04 551.00v-4M135.04 362.20v8.60M146.17 182.00v4M146.17 551.00v-4M146.17 362.20v8.60M157.30 182.00v9M157.30 551.00v-9M157.30 358.90v15.20M168.43 182.00v4M168.43 551.00v-4M168.43 362.20v8.60M179.56 182.00v4M179.56 551.00v-4M179.56 362.20v8.60M190.69 182.00v4M190.69 551.00v-4M190.69 362.20v8.60M201.82 182.00v4M201.82 551.00v-4M201.82 362.20v8.60M212.95 182.00v9M212.95 551.00v-9M212.95 358.90v15.20M224.08 182.00v4M224.08 551.00v-4M224.08 362.20v8.60M235.21 182.00v4M235.21 551.00v-4M235.21 362.20v8.60M246.34 182.00v4M246.34 551.00v-4M246.34 362.20v8.60M257.47 182.00v4M257.47 551.00v-4M257.47 362.20v8.60M268.60 182.00v9M268.60 551.00v-9M268.60 358.90v15.20M279.73 182.00v4M279.73 551.00v-4M279.73 362.20v8.60M290.86 182.00v4M290.86 551.00v-4M290.86 362.20v8.60M301.99 182.00v4M301.99 551.00v-4M301.99 362.20v8.60M313.12 182.00v4M313.12 551.00v-4M313.12 362.20v8.60M324.25 182.00v9M324.25 551.00v-9M324.25 358.90v15.20M335.38 182.00v4M335.38 551.00v-4M335.38 362.20v8.60M346.51 182.00v4M346.51 551.00v-4M346.51 362.20v8.60M357.64 182.00v4M357.64 551.00v-4M357.64 362.20v8.60M368.77 182.00v4M368.77 551.00v-4M368.77 362.20v8.60M379.90 182.00v9M379.90 551.00v-9M379.90 358.90v15.20M391.03 182.00v4M391.03 551.00v-4M391.03 362.20v8.60M402.16 182.00v4M402.16 551.00v-4M402.16 362.20v8.60M413.29 182.00v4M413.29 551.00v-4M413.29 362.20v8.60M424.42 182.00v4M424.42 551.00v-4M424.42 362.20v8.60M435.55 182.00v9M435.55 551.00v-9M435.55 358.90v15.20M446.68 182.00v4M446.68 551.00v-4M446.68 362.20v8.60M457.81 182.00v4M457.81 551.00v-4M457.81 362.20v8.60M468.94 182.00v4M468.94 551.00v-4M468.94 362.20v8.60M480.07 182.00v4M480.07 551.00v-4M480.07 362.20v8.60M491.20 182.00v9M491.20 551.00v-9M491.20 358.90v15.20M502.33 182.00v4M502.33 551.00v-4M502.33 362.20v8.60M513.46 182.00v4M513.46 551.00v-4M513.46 362.20v8.60M524.59 182.00v4M524.59 551.00v-4M524.59 362.20v8.60M535.72 182.00v4M535.72 551.00v-4M535.72 362.20v8.60M546.85 182.00v9M546.85 551.00v-9M546.85 358.90v15.20M557.98 182.00v4M557.98 551.00v-4M557.98 362.20v8.60M569.11 182.00v4M569.11 551.00v-4M569.11 362.20v8.60M580.24 182.00v4M580.24 551.00v-4M580.24 362.20v8.60M591.37 182.00v4M591.37 551.00v-4M591.37 362.20v8.60" stroke="#a09878" stroke-width="1.3" fill="none"/><rect x="246.00" y="173.00" width="113.00" height="4.80" fill="#f2e614" /><path d="M276 85 H288 L282 90.8 Z" fill="#ea6e28"/><rect x="21.90" y="111.80" width="23.90" height="16.00" fill="#c050b0" /><rect x="21.90" y="326.80" width="23.90" height="16.10" fill="#c050b0" /><g style="font-family:'Liberation Sans', sans-serif"><text x="30.00" y="55.80" fill="#161616" font-size="13.5" font-weight="normal" text-anchor="start" textLength="19.0" lengthAdjust="spacingAndGlyphs" >File</text><text x="63.90" y="55.80" fill="#161616" font-size="13.5" font-weight="normal" text-anchor="start" textLength="21.8" lengthAdjust="spacingAndGlyphs" >Edit</text><text x="100.50" y="55.80" fill="#161616" font-size="13.5" font-weight="normal" text-anchor="start" textLength="41.0" lengthAdjust="spacingAndGlyphs" >Vertical</text><text x="156.50" y="55.80" fill="#161616" font-size="13.5" font-weight="normal" text-anchor="start" textLength="55.0" lengthAdjust="spacingAndGlyphs" >Horiz/Acq</text><text x="227.30" y="55.80" fill="#161616" font-size="13.5" font-weight="normal" text-anchor="start" textLength="21.5" lengthAdjust="spacingAndGlyphs" >Trig</text><text x="263.00" y="55.80" fill="#161616" font-size="13.5" font-weight="normal" text-anchor="start" textLength="40.0" lengthAdjust="spacingAndGlyphs" >Display</text><text x="315.00" y="55.80" fill="#161616" font-size="13.5" font-weight="normal" text-anchor="start" textLength="40.5" lengthAdjust="spacingAndGlyphs" >Cursors</text><text x="370.80" y="55.80" fill="#161616" font-size="13.5" font-weight="normal" text-anchor="start" textLength="47.2" lengthAdjust="spacingAndGlyphs" >Measure</text><text x="433.00" y="55.80" fill="#161616" font-size="13.5" font-weight="normal" text-anchor="start" textLength="35.5" lengthAdjust="spacingAndGlyphs" >Masks</text><text x="484.20" y="55.80" fill="#161616" font-size="13.5" font-weight="normal" text-anchor="start" textLength="27.7" lengthAdjust="spacingAndGlyphs" >Math</text><text x="524.40" y="55.80" fill="#161616" font-size="13.5" font-weight="normal" text-anchor="start" textLength="51.3" lengthAdjust="spacingAndGlyphs" >MyScope</text><text x="587.50" y="55.80" fill="#161616" font-size="13.5" font-weight="normal" text-anchor="start" textLength="38.5" lengthAdjust="spacingAndGlyphs" >Utilities</text><text x="640.40" y="55.80" fill="#161616" font-size="13.5" font-weight="normal" text-anchor="start" textLength="26.5" lengthAdjust="spacingAndGlyphs" >Help</text><path d="M30.00 58.4h7.20M63.90 58.4h8.44M100.50 58.4h8.34M165.66 58.4h7.06M227.30 58.4h7.79M263.00 58.4h8.81M315.00 58.4h8.35M394.40 58.4h6.07M443.24 58.4h6.83M484.20 58.4h10.38M534.65 58.4h6.15M587.50 58.4h8.63M640.40 58.4h9.31" stroke="#141414" stroke-width="1.1" fill="none" stroke-linejoin="miter" /><text x="21.80" y="80.80" fill="#e4eaf0" font-size="14" font-weight="normal" text-anchor="start" textLength="21.5" lengthAdjust="spacingAndGlyphs" >Tek</text><text x="64.80" y="80.80" fill="#bccad8" font-size="14" font-weight="normal" text-anchor="start" textLength="21.0" lengthAdjust="spacingAndGlyphs" >Run</text><text x="120.00" y="80.80" fill="#bccad8" font-size="14" font-weight="normal" text-anchor="start" textLength="39.0" lengthAdjust="spacingAndGlyphs" >Sample</text><text x="242.60" y="80.80" fill="#bccad8" font-size="14" font-weight="normal" text-anchor="start" textLength="49.0" lengthAdjust="spacingAndGlyphs" >333 Acqs</text><text x="466.00" y="80.80" fill="#bccad8" font-size="14" font-weight="normal" text-anchor="start" textLength="99.0" lengthAdjust="spacingAndGlyphs" >19 Jul 12 17:45:55</text><text x="45.90" y="143.70" fill="#f2e614" font-size="12" font-weight="normal" text-anchor="start" textLength="19.3" lengthAdjust="spacingAndGlyphs" >Ch1</text><text x="91.00" y="143.70" fill="#f2e614" font-size="12" font-weight="normal" text-anchor="start" textLength="28.8" lengthAdjust="spacingAndGlyphs" >20.0V</text><text x="155.50" y="143.70" fill="#f2e614" font-size="12" font-weight="normal" text-anchor="start" textLength="14.7" lengthAdjust="spacingAndGlyphs" >Bw</text><text x="45.90" y="157.40" fill="#c050b0" font-size="12" font-weight="normal" text-anchor="start" textLength="19.3" lengthAdjust="spacingAndGlyphs" >Ch3</text><text x="91.00" y="157.40" fill="#c050b0" font-size="12" font-weight="normal" text-anchor="start" textLength="28.8" lengthAdjust="spacingAndGlyphs" >20.0V</text><text x="155.50" y="157.40" fill="#c050b0" font-size="12" font-weight="normal" text-anchor="start" textLength="14.7" lengthAdjust="spacingAndGlyphs" >Bw</text><text x="212.60" y="113.50" fill="#f2e614" font-size="12" font-weight="normal" text-anchor="start" textLength="12.0" lengthAdjust="spacingAndGlyphs" >LX</text><text x="240.70" y="114.00" fill="#c050b0" font-size="12" font-weight="normal" text-anchor="start" textLength="26.3" lengthAdjust="spacingAndGlyphs" >VLED</text><text x="213.40" y="142.50" fill="#64c8e6" font-size="12" font-weight="normal" text-anchor="start" textLength="19.3" lengthAdjust="spacingAndGlyphs" >Ch2</text><text x="257.00" y="142.50" fill="#64c8e6" font-size="12" font-weight="normal" text-anchor="start" textLength="24.0" lengthAdjust="spacingAndGlyphs" >5.0V</text><text x="322.00" y="142.50" fill="#64c8e6" font-size="12" font-weight="normal" text-anchor="start" textLength="14.7" lengthAdjust="spacingAndGlyphs" >Bw</text><text x="213.00" y="157.70" fill="#5cc03c" font-size="12" font-weight="normal" text-anchor="start" textLength="19.3" lengthAdjust="spacingAndGlyphs" >Ch4</text><text x="239.00" y="157.70" fill="#64c8e6" font-size="12" font-weight="normal" text-anchor="start" textLength="19.0" lengthAdjust="spacingAndGlyphs" >DIM</text><text x="258.00" y="157.70" fill="#5cc03c" font-size="12" font-weight="normal" text-anchor="start" textLength="36.0" lengthAdjust="spacingAndGlyphs" >500mA</text><text x="305.50" y="157.70" fill="#5cc03c" font-size="12" font-weight="normal" text-anchor="start" textLength="8.0" lengthAdjust="spacingAndGlyphs" >Ω</text><text x="322.00" y="157.70" fill="#5cc03c" font-size="12" font-weight="normal" text-anchor="start" textLength="14.7" lengthAdjust="spacingAndGlyphs" >Bw</text><text x="239.00" y="168.00" fill="#5cc03c" font-size="12" font-weight="normal" text-anchor="start" textLength="7.5" lengthAdjust="spacingAndGlyphs" >IL</text><text x="380.00" y="143.50" fill="#e8e8e8" font-size="12" font-weight="normal" text-anchor="start" textLength="95.5" lengthAdjust="spacingAndGlyphs" >M 100μs 1.25GS/s</text><text x="500.70" y="143.50" fill="#e8e8e8" font-size="12" font-weight="normal" text-anchor="start" textLength="47.3" lengthAdjust="spacingAndGlyphs" >800ps/pt</text><text x="380.00" y="158.20" fill="#e8e8e8" font-size="12" font-weight="normal" text-anchor="start" textLength="8.0" lengthAdjust="spacingAndGlyphs" >A</text><text x="393.60" y="158.20" fill="#5cc03c" font-size="12" font-weight="normal" text-anchor="start" textLength="19.3" lengthAdjust="spacingAndGlyphs" >Ch4</text><path d="M423 157.3 H424.6 L428.4 151.6 H430" stroke="#e0e0e0" stroke-width="1.1" fill="none" stroke-linejoin="round" /><text x="436.80" y="158.20" fill="#e8e8e8" font-size="12" font-weight="normal" text-anchor="start" textLength="36.5" lengthAdjust="spacingAndGlyphs" >730mA</text><text x="72.70" y="273.40" fill="#c050b0" font-size="12.5" font-weight="normal" text-anchor="start" textLength="27.6" lengthAdjust="spacingAndGlyphs" >VLED</text><text x="54.40" y="450.50" fill="#64c8e6" font-size="12.5" font-weight="normal" text-anchor="start" textLength="19.5" lengthAdjust="spacingAndGlyphs" >DIM</text><text x="29.70" y="125.60" fill="#000" font-size="14.5" font-weight="normal" text-anchor="start" textLength="4.8" lengthAdjust="spacingAndGlyphs" >3</text><path d="M37.6 120.00H42" stroke="#000" stroke-width="1.1"/><path d="M41 117.00L45.5 120.00L41 123.00L42 120.00Z" fill="#000"/><text x="29.70" y="340.90" fill="#000" font-size="14.5" font-weight="normal" text-anchor="start" textLength="4.8" lengthAdjust="spacingAndGlyphs" >3</text><path d="M37.6 335.30H42" stroke="#000" stroke-width="1.1"/><path d="M41 332.30L45.5 335.30L41 338.30L42 335.30Z" fill="#000"/><text x="29.70" y="148.60" fill="#64c8e6" font-size="14.5" font-weight="normal" text-anchor="start" textLength="4.8" lengthAdjust="spacingAndGlyphs" >2</text><path d="M37.6 143.00H42" stroke="#64c8e6" stroke-width="1.1"/><path d="M41 140.00L45.5 143.00L41 146.00L42 143.00Z" fill="#64c8e6"/><text x="29.70" y="166.80" fill="#5cc03c" font-size="14.5" font-weight="normal" text-anchor="start" textLength="4.8" lengthAdjust="spacingAndGlyphs" >4</text><path d="M37.6 161.20H42" stroke="#5cc03c" stroke-width="1.1"/><path d="M41 158.20L45.5 161.20L41 164.20L42 161.20Z" fill="#5cc03c"/><text x="29.70" y="430.20" fill="#64c8e6" font-size="14.5" font-weight="normal" text-anchor="start" textLength="4.8" lengthAdjust="spacingAndGlyphs" >2</text><path d="M37.6 424.60H42" stroke="#64c8e6" stroke-width="1.1"/><path d="M41 421.60L45.5 424.60L41 427.60L42 424.60Z" fill="#64c8e6"/><text x="29.70" y="504.30" fill="#5cc03c" font-size="14.5" font-weight="normal" text-anchor="start" textLength="4.8" lengthAdjust="spacingAndGlyphs" >4</text><path d="M37.6 498.70H42" stroke="#5cc03c" stroke-width="1.1"/><path d="M41 495.70L45.5 498.70L41 501.70L42 498.70Z" fill="#5cc03c"/><text x="605.50" y="232.80" fill="#6cc4d4" font-size="12" font-weight="normal" text-anchor="start" textLength="65.9" lengthAdjust="spacingAndGlyphs" >+DtyCyc(C2)!</text><text x="680.70" y="232.80" fill="#6cc4d4" font-size="12" font-weight="normal" text-anchor="start" textLength="30.5" lengthAdjust="spacingAndGlyphs" >10.0%</text><text x="605.50" y="247.60" fill="#6cc4d4" font-size="12" font-weight="normal" text-anchor="start" textLength="9.3" lengthAdjust="spacingAndGlyphs" >μ:</text><text x="621.90" y="247.60" fill="#6cc4d4" font-size="12" font-weight="normal" text-anchor="start" textLength="56.0" lengthAdjust="spacingAndGlyphs" >27.708076</text><text x="605.50" y="262.40" fill="#6cc4d4" font-size="12" font-weight="normal" text-anchor="start" textLength="12.2" lengthAdjust="spacingAndGlyphs" >m:</text><text x="622.60" y="262.40" fill="#6cc4d4" font-size="12" font-weight="normal" text-anchor="start" textLength="22.2" lengthAdjust="spacingAndGlyphs" >10.0</text><text x="678.80" y="262.40" fill="#6cc4d4" font-size="12" font-weight="normal" text-anchor="start" textLength="11.5" lengthAdjust="spacingAndGlyphs" >M:</text><text x="695.20" y="262.40" fill="#6cc4d4" font-size="12" font-weight="normal" text-anchor="start" textLength="23.0" lengthAdjust="spacingAndGlyphs" >50.0</text><text x="605.50" y="277.20" fill="#6cc4d4" font-size="12" font-weight="normal" text-anchor="start" textLength="9.0" lengthAdjust="spacingAndGlyphs" >σ:</text><text x="622.20" y="277.20" fill="#6cc4d4" font-size="12" font-weight="normal" text-anchor="start" textLength="28.6" lengthAdjust="spacingAndGlyphs" >19.32</text><text x="678.80" y="277.20" fill="#6cc4d4" font-size="12" font-weight="normal" text-anchor="start" textLength="8.5" lengthAdjust="spacingAndGlyphs" >n:</text><text x="695.70" y="277.20" fill="#6cc4d4" font-size="12" font-weight="normal" text-anchor="start" textLength="22.4" lengthAdjust="spacingAndGlyphs" >75.0</text><line x1="605.00" y1="288.00" x2="731.20" y2="288.00" stroke="#9a9a9a" stroke-width="1.8"/><text x="605.50" y="302.30" fill="#6cc4d4" font-size="12" font-weight="normal" text-anchor="start" textLength="47.8" lengthAdjust="spacingAndGlyphs" >Freq(C2)!</text><text x="678.50" y="302.30" fill="#6cc4d4" font-size="12" font-weight="normal" text-anchor="start" textLength="34.4" lengthAdjust="spacingAndGlyphs" >2.0kHz</text><text x="605.50" y="317.10" fill="#6cc4d4" font-size="12" font-weight="normal" text-anchor="start" textLength="9.3" lengthAdjust="spacingAndGlyphs" >μ:</text><text x="621.90" y="317.10" fill="#6cc4d4" font-size="12" font-weight="normal" text-anchor="start" textLength="61.0" lengthAdjust="spacingAndGlyphs" >1.9999267k</text><text x="605.50" y="331.90" fill="#6cc4d4" font-size="12" font-weight="normal" text-anchor="start" textLength="12.2" lengthAdjust="spacingAndGlyphs" >m:</text><text x="622.60" y="331.90" fill="#6cc4d4" font-size="12" font-weight="normal" text-anchor="start" textLength="21.0" lengthAdjust="spacingAndGlyphs" >2.0k</text><text x="678.80" y="331.90" fill="#6cc4d4" font-size="12" font-weight="normal" text-anchor="start" textLength="11.5" lengthAdjust="spacingAndGlyphs" >M:</text><text x="695.20" y="331.90" fill="#6cc4d4" font-size="12" font-weight="normal" text-anchor="start" textLength="23.0" lengthAdjust="spacingAndGlyphs" >2.0k</text><text x="605.50" y="346.70" fill="#6cc4d4" font-size="12" font-weight="normal" text-anchor="start" textLength="9.0" lengthAdjust="spacingAndGlyphs" >σ:</text><text x="622.20" y="346.70" fill="#6cc4d4" font-size="12" font-weight="normal" text-anchor="start" textLength="38.2" lengthAdjust="spacingAndGlyphs" >2.908m</text><text x="678.80" y="346.70" fill="#6cc4d4" font-size="12" font-weight="normal" text-anchor="start" textLength="8.5" lengthAdjust="spacingAndGlyphs" >n:</text><text x="695.70" y="346.70" fill="#6cc4d4" font-size="12" font-weight="normal" text-anchor="start" textLength="22.4" lengthAdjust="spacingAndGlyphs" >98.0</text><line x1="605.00" y1="357.40" x2="731.20" y2="357.40" stroke="#dcdcdc" stroke-width="1.5"/><text x="605.50" y="371.80" fill="#c050b0" font-size="12" font-weight="normal" text-anchor="start" textLength="43.0" lengthAdjust="spacingAndGlyphs" >Max(C3)</text><text x="678.70" y="371.80" fill="#c050b0" font-size="12" font-weight="normal" text-anchor="start" textLength="29.6" lengthAdjust="spacingAndGlyphs" >34.4V</text><text x="605.50" y="386.60" fill="#c050b0" font-size="12" font-weight="normal" text-anchor="start" textLength="9.3" lengthAdjust="spacingAndGlyphs" >μ:</text><text x="621.90" y="386.60" fill="#c050b0" font-size="12" font-weight="normal" text-anchor="start" textLength="56.5" lengthAdjust="spacingAndGlyphs" >34.042856</text><text x="605.50" y="401.40" fill="#c050b0" font-size="12" font-weight="normal" text-anchor="start" textLength="12.2" lengthAdjust="spacingAndGlyphs" >m:</text><text x="622.60" y="401.40" fill="#c050b0" font-size="12" font-weight="normal" text-anchor="start" textLength="22.4" lengthAdjust="spacingAndGlyphs" >33.6</text><text x="678.80" y="401.40" fill="#c050b0" font-size="12" font-weight="normal" text-anchor="start" textLength="11.5" lengthAdjust="spacingAndGlyphs" >M:</text><text x="695.20" y="401.40" fill="#c050b0" font-size="12" font-weight="normal" text-anchor="start" textLength="21.6" lengthAdjust="spacingAndGlyphs" >34.4</text><text x="605.50" y="416.20" fill="#c050b0" font-size="12" font-weight="normal" text-anchor="start" textLength="9.0" lengthAdjust="spacingAndGlyphs" >σ:</text><text x="622.20" y="416.20" fill="#c050b0" font-size="12" font-weight="normal" text-anchor="start" textLength="39.8" lengthAdjust="spacingAndGlyphs" >402.5m</text><text x="678.80" y="416.20" fill="#c050b0" font-size="12" font-weight="normal" text-anchor="start" textLength="8.5" lengthAdjust="spacingAndGlyphs" >n:</text><text x="695.70" y="416.20" fill="#c050b0" font-size="12" font-weight="normal" text-anchor="start" textLength="21.9" lengthAdjust="spacingAndGlyphs" >47.0</text><line x1="605.00" y1="427.00" x2="731.20" y2="427.00" stroke="#dcdcdc" stroke-width="1.5"/><text x="605.50" y="441.30" fill="#f2e614" font-size="12" font-weight="normal" text-anchor="start" textLength="66.4" lengthAdjust="spacingAndGlyphs" >+DtyCyc(C1)!</text><text x="678.70" y="441.30" fill="#f2e614" font-size="12" font-weight="normal" text-anchor="start" textLength="39.4" lengthAdjust="spacingAndGlyphs" >94.89%</text><text x="605.50" y="456.10" fill="#f2e614" font-size="12" font-weight="normal" text-anchor="start" textLength="9.3" lengthAdjust="spacingAndGlyphs" >μ:</text><text x="621.90" y="456.10" fill="#f2e614" font-size="12" font-weight="normal" text-anchor="start" textLength="56.5" lengthAdjust="spacingAndGlyphs" >84.838941</text><text x="605.50" y="470.90" fill="#f2e614" font-size="12" font-weight="normal" text-anchor="start" textLength="12.2" lengthAdjust="spacingAndGlyphs" >m:</text><text x="622.60" y="470.90" fill="#f2e614" font-size="12" font-weight="normal" text-anchor="start" textLength="28.4" lengthAdjust="spacingAndGlyphs" >67.14</text><text x="678.80" y="470.90" fill="#f2e614" font-size="12" font-weight="normal" text-anchor="start" textLength="11.5" lengthAdjust="spacingAndGlyphs" >M:</text><text x="695.20" y="470.90" fill="#f2e614" font-size="12" font-weight="normal" text-anchor="start" textLength="29.0" lengthAdjust="spacingAndGlyphs" >99.78</text><text x="605.50" y="485.70" fill="#f2e614" font-size="12" font-weight="normal" text-anchor="start" textLength="9.0" lengthAdjust="spacingAndGlyphs" >σ:</text><text x="622.20" y="485.70" fill="#f2e614" font-size="12" font-weight="normal" text-anchor="start" textLength="22.4" lengthAdjust="spacingAndGlyphs" >14.9</text><text x="678.80" y="485.70" fill="#f2e614" font-size="12" font-weight="normal" text-anchor="start" textLength="8.5" lengthAdjust="spacingAndGlyphs" >n:</text><text x="695.70" y="485.70" fill="#f2e614" font-size="12" font-weight="normal" text-anchor="start" textLength="21.9" lengthAdjust="spacingAndGlyphs" >38.0</text><path d="M46.80 584.2V554.5H152.30" stroke="#f2e614" stroke-width="1.5" fill="none" stroke-linejoin="round" /><text x="48.50" y="568.10" fill="#f2e614" font-size="12" font-weight="normal" text-anchor="start" textLength="38.9" lengthAdjust="spacingAndGlyphs" >Zoom 1</text><text x="106.20" y="568.10" fill="#f2e614" font-size="12" font-weight="normal" text-anchor="start" >Ch1 —</text><text x="48.50" y="581.80" fill="#e8e8e8" font-size="12" font-weight="normal" text-anchor="start" >20.0V</text><text x="107.40" y="581.80" fill="#e8e8e8" font-size="12" font-weight="normal" text-anchor="start" >20.0μs</text><path d="M186.70 584.2V554.5H292.20" stroke="#f2e614" stroke-width="1.5" fill="none" stroke-linejoin="round" /><text x="188.40" y="568.10" fill="#f2e614" font-size="12" font-weight="normal" text-anchor="start" textLength="38.9" lengthAdjust="spacingAndGlyphs" >Zoom 1</text><text x="246.10" y="568.10" fill="#64c8e6" font-size="12" font-weight="normal" text-anchor="start" >Ch2 —</text><text x="188.40" y="581.80" fill="#e8e8e8" font-size="12" font-weight="normal" text-anchor="start" >5.0V</text><text x="247.30" y="581.80" fill="#e8e8e8" font-size="12" font-weight="normal" text-anchor="start" >20.0μs</text><path d="M325.50 584.2V554.5H431.00" stroke="#f2e614" stroke-width="1.5" fill="none" stroke-linejoin="round" /><text x="327.20" y="568.10" fill="#f2e614" font-size="12" font-weight="normal" text-anchor="start" textLength="38.9" lengthAdjust="spacingAndGlyphs" >Zoom 1</text><text x="384.90" y="568.10" fill="#c050b0" font-size="12" font-weight="normal" text-anchor="start" >Ch3 —</text><text x="327.20" y="581.80" fill="#e8e8e8" font-size="12" font-weight="normal" text-anchor="start" >20.0V</text><text x="386.10" y="581.80" fill="#e8e8e8" font-size="12" font-weight="normal" text-anchor="start" >20.0μs</text><path d="M464.00 584.2V554.5H569.50" stroke="#f2e614" stroke-width="1.5" fill="none" stroke-linejoin="round" /><text x="465.70" y="568.10" fill="#f2e614" font-size="12" font-weight="normal" text-anchor="start" textLength="38.9" lengthAdjust="spacingAndGlyphs" >Zoom 1</text><text x="523.40" y="568.10" fill="#5cc03c" font-size="12" font-weight="normal" text-anchor="start" >Ch4 —</text><text x="465.70" y="581.80" fill="#e8e8e8" font-size="12" font-weight="normal" text-anchor="start" >500mA</text><text x="524.60" y="581.80" fill="#e8e8e8" font-size="12" font-weight="normal" text-anchor="start" >20.0μs</text><text transform="translate(746.5,569) rotate(-90)" fill="#222" font-size="13" textLength="72" lengthAdjust="spacingAndGlyphs">AM13497v1</text></g>
</svg></body></html>
